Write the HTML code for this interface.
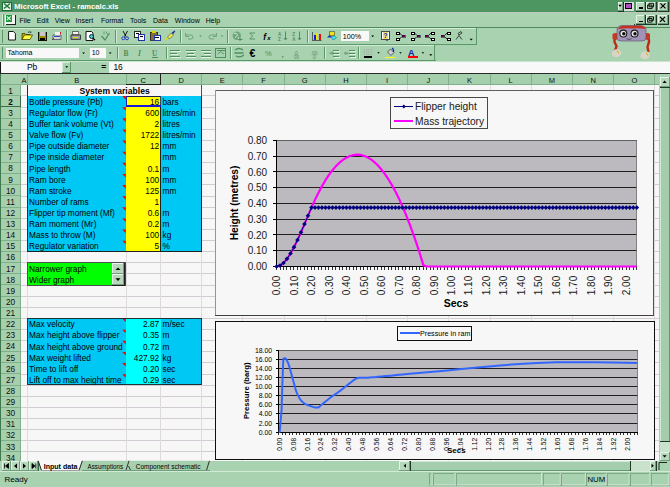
<!DOCTYPE html>
<html><head><meta charset="utf-8"><title>Excel</title>
<style>html,body{margin:0;padding:0;width:670px;height:487px;overflow:hidden;background:#f7f7f7}
svg{display:block} text{font-family:"Liberation Sans",sans-serif} rect,line{shape-rendering:crispEdges}</style></head>
<body><svg width="670" height="487" viewBox="0 0 670 487" style="font-family:'Liberation Sans',sans-serif">
<rect x="0.00" y="0.00" width="670.00" height="12.00" fill="#4e9661" />
<rect x="2.00" y="1.50" width="10.00" height="9.00" fill="#1f6b35" />
<rect x="3.00" y="2.50" width="8.00" height="7.00" fill="#e8f4ea" />
<path d="M4,3.5 L10,8.5 M10,3.5 L4,8.5" stroke="#1f7a3a" stroke-width="1.6"/>
<text x="14.30" y="9.30" font-size="7.6" fill="#ffffff" text-anchor="start" font-weight="bold"  style="">Microsoft Excel - ramcalc.xls</text>
<rect x="617.60" y="1.50" width="5.00" height="9.00" fill="#b5d8bb" />
<rect x="617.60" y="1.50" width="5.00" height="1.00" fill="#e6f3e8" />
<rect x="617.60" y="1.50" width="1.00" height="9.00" fill="#e6f3e8" />
<rect x="617.60" y="9.50" width="5.00" height="1.00" fill="#6f9f7a" />
<rect x="621.60" y="1.50" width="1.00" height="9.00" fill="#6f9f7a" />
<rect x="617.60" y="10.50" width="6.00" height="1.00" fill="#1e3a25" />
<rect x="622.60" y="1.50" width="1.00" height="10.00" fill="#1e3a25" />
<path d="M618.4,4.8 h3.4 l-1.7,2.2z" fill="#000"/>
<rect x="623.90" y="1.50" width="9.80" height="9.00" fill="#dcdcdc" />
<rect x="625.30" y="2.80" width="7.00" height="6.40" fill="#000" />
<rect x="626.30" y="3.80" width="5.00" height="4.40" fill="#b050c0" />
<rect x="636.00" y="1.50" width="9.40" height="9.00" fill="#b5d8bb" />
<rect x="636.00" y="1.50" width="9.40" height="1.00" fill="#e6f3e8" />
<rect x="636.00" y="1.50" width="1.00" height="9.00" fill="#e6f3e8" />
<rect x="636.00" y="9.50" width="9.40" height="1.00" fill="#6f9f7a" />
<rect x="644.40" y="1.50" width="1.00" height="9.00" fill="#6f9f7a" />
<rect x="636.00" y="10.50" width="10.40" height="1.00" fill="#1e3a25" />
<rect x="645.40" y="1.50" width="1.00" height="10.00" fill="#1e3a25" />
<rect x="638.5" y="7.2" width="4" height="1.3" fill="#000"/>
<rect x="645.60" y="1.50" width="10.40" height="9.00" fill="#b5d8bb" />
<rect x="645.60" y="1.50" width="10.40" height="1.00" fill="#e6f3e8" />
<rect x="645.60" y="1.50" width="1.00" height="9.00" fill="#e6f3e8" />
<rect x="645.60" y="9.50" width="10.40" height="1.00" fill="#6f9f7a" />
<rect x="655.00" y="1.50" width="1.00" height="9.00" fill="#6f9f7a" />
<rect x="645.60" y="10.50" width="11.40" height="1.00" fill="#1e3a25" />
<rect x="656.00" y="1.50" width="1.00" height="10.00" fill="#1e3a25" />
<path d="M649,3.3 h4.5 v3.5 h-4.5z M647.6,5 h4.5 v3.6 h-4.5z" fill="none" stroke="#000" stroke-width="0.9"/>
<rect x="658.00" y="1.50" width="10.20" height="9.00" fill="#b5d8bb" />
<rect x="658.00" y="1.50" width="10.20" height="1.00" fill="#e6f3e8" />
<rect x="658.00" y="1.50" width="1.00" height="9.00" fill="#e6f3e8" />
<rect x="658.00" y="9.50" width="10.20" height="1.00" fill="#6f9f7a" />
<rect x="667.20" y="1.50" width="1.00" height="9.00" fill="#6f9f7a" />
<rect x="658.00" y="10.50" width="11.20" height="1.00" fill="#1e3a25" />
<rect x="668.20" y="1.50" width="1.00" height="10.00" fill="#1e3a25" />
<path d="M660.5,3.4 L665.5,8.4 M665.5,3.4 L660.5,8.4" stroke="#000" stroke-width="1.2"/>
<rect x="0.00" y="12.00" width="670.00" height="61.00" fill="#a8d2b0" />
<rect x="0.00" y="12.00" width="670.00" height="1.00" fill="#c2c6c0" />
<rect x="0.00" y="27.00" width="670.00" height="1.00" fill="#4f8a5c" />
<rect x="1.50" y="14.00" width="1.00" height="12.00" fill="#d2ead6" />
<rect x="2.50" y="14.00" width="1.00" height="12.00" fill="#5a9868" />
<rect x="5.00" y="14.50" width="10.00" height="10.00" fill="#f4f4f4" />
<rect x="5.50" y="24.00" width="10.50" height="1.20" fill="#202020" />
<rect x="15.00" y="15.00" width="1.20" height="10.00" fill="#202020" />
<rect x="5.50" y="15.00" width="6.50" height="6.50" fill="#1a9a3a" />
<path d="M6.8,16.3 L10.7,20.2 M10.7,16.3 L6.8,20.2" stroke="#e8f4ea" stroke-width="1.1"/>
<text x="19.40" y="23.30" font-size="7.0" fill="#000" text-anchor="start"  style="">File</text>
<rect x="19.40" y="24.60" width="3.50" height="0.70" fill="#404040" />
<text x="36.70" y="23.30" font-size="7.0" fill="#000" text-anchor="start"  style="">Edit</text>
<rect x="36.70" y="24.60" width="3.50" height="0.70" fill="#404040" />
<text x="54.70" y="23.30" font-size="7.0" fill="#000" text-anchor="start"  style="">View</text>
<rect x="54.70" y="24.60" width="4.50" height="0.70" fill="#404040" />
<text x="75.60" y="23.30" font-size="7.0" fill="#000" text-anchor="start"  style="">Insert</text>
<rect x="75.60" y="24.60" width="2.00" height="0.70" fill="#404040" />
<text x="101.00" y="23.30" font-size="7.0" fill="#000" text-anchor="start"  style="">Format</text>
<rect x="105.50" y="24.60" width="3.50" height="0.70" fill="#404040" />
<text x="130.00" y="23.30" font-size="7.0" fill="#000" text-anchor="start"  style="">Tools</text>
<rect x="130.00" y="24.60" width="3.80" height="0.70" fill="#404040" />
<text x="153.00" y="23.30" font-size="7.0" fill="#000" text-anchor="start"  style="">Data</text>
<rect x="153.00" y="24.60" width="4.20" height="0.70" fill="#404040" />
<text x="174.80" y="23.30" font-size="7.0" fill="#000" text-anchor="start"  style="">Window</text>
<rect x="174.80" y="24.60" width="5.50" height="0.70" fill="#404040" />
<text x="205.70" y="23.30" font-size="7.0" fill="#000" text-anchor="start"  style="">Help</text>
<rect x="205.70" y="24.60" width="4.20" height="0.70" fill="#404040" />
<rect x="636.00" y="15.00" width="9.40" height="9.40" fill="#b5d8bb" />
<rect x="636.00" y="15.00" width="9.40" height="1.00" fill="#e6f3e8" />
<rect x="636.00" y="15.00" width="1.00" height="9.40" fill="#e6f3e8" />
<rect x="636.00" y="23.40" width="9.40" height="1.00" fill="#6f9f7a" />
<rect x="644.40" y="15.00" width="1.00" height="9.40" fill="#6f9f7a" />
<rect x="636.00" y="24.40" width="10.40" height="1.00" fill="#1e3a25" />
<rect x="645.40" y="15.00" width="1.00" height="10.40" fill="#1e3a25" />
<rect x="638.5" y="20.6" width="4" height="1.3" fill="#000"/>
<rect x="645.60" y="15.00" width="10.40" height="9.40" fill="#b5d8bb" />
<rect x="645.60" y="15.00" width="10.40" height="1.00" fill="#e6f3e8" />
<rect x="645.60" y="15.00" width="1.00" height="9.40" fill="#e6f3e8" />
<rect x="645.60" y="23.40" width="10.40" height="1.00" fill="#6f9f7a" />
<rect x="655.00" y="15.00" width="1.00" height="9.40" fill="#6f9f7a" />
<rect x="645.60" y="24.40" width="11.40" height="1.00" fill="#1e3a25" />
<rect x="656.00" y="15.00" width="1.00" height="10.40" fill="#1e3a25" />
<path d="M649,16.8 h4.5 v3.5 h-4.5z M647.6,18.5 h4.5 v3.6 h-4.5z" fill="none" stroke="#000" stroke-width="0.9"/>
<rect x="657.50" y="15.00" width="10.50" height="9.40" fill="#b5d8bb" />
<rect x="657.50" y="15.00" width="10.50" height="1.00" fill="#e6f3e8" />
<rect x="657.50" y="15.00" width="1.00" height="9.40" fill="#e6f3e8" />
<rect x="657.50" y="23.40" width="10.50" height="1.00" fill="#6f9f7a" />
<rect x="667.00" y="15.00" width="1.00" height="9.40" fill="#6f9f7a" />
<rect x="657.50" y="24.40" width="11.50" height="1.00" fill="#1e3a25" />
<rect x="668.00" y="15.00" width="1.00" height="10.40" fill="#1e3a25" />
<path d="M660,16.9 L665,21.9 M665,16.9 L660,21.9" stroke="#000" stroke-width="1.2"/>
<rect x="0.00" y="28.00" width="476.00" height="16.30" fill="#a8d2b0" />
<rect x="0.00" y="28.00" width="476.00" height="1.00" fill="#d2ead6" />
<rect x="0.00" y="43.60" width="476.50" height="1.00" fill="#5a9868" />
<rect x="475.60" y="28.00" width="1.00" height="16.00" fill="#5a9868" />
<rect x="1.50" y="29.50" width="1.00" height="13.00" fill="#d2ead6" />
<rect x="2.40" y="29.50" width="1.00" height="13.00" fill="#5a9868" />
<rect x="0.00" y="44.50" width="435.00" height="16.50" fill="#a8d2b0" />
<rect x="0.00" y="44.50" width="435.00" height="1.00" fill="#d2ead6" />
<rect x="0.00" y="60.20" width="435.50" height="1.00" fill="#5a9868" />
<rect x="434.40" y="44.50" width="1.00" height="16.50" fill="#5a9868" />
<rect x="1.50" y="46.50" width="1.00" height="12.50" fill="#d2ead6" />
<rect x="2.40" y="46.50" width="1.00" height="12.50" fill="#5a9868" />
<rect x="66.00" y="29.50" width="1.00" height="13.00" fill="#5a9868" />
<rect x="67.00" y="29.50" width="1.00" height="13.00" fill="#d2ead6" />
<rect x="115.00" y="29.50" width="1.00" height="13.00" fill="#5a9868" />
<rect x="116.00" y="29.50" width="1.00" height="13.00" fill="#d2ead6" />
<rect x="180.00" y="29.50" width="1.00" height="13.00" fill="#5a9868" />
<rect x="181.00" y="29.50" width="1.00" height="13.00" fill="#d2ead6" />
<rect x="227.00" y="29.50" width="1.00" height="13.00" fill="#5a9868" />
<rect x="228.00" y="29.50" width="1.00" height="13.00" fill="#d2ead6" />
<rect x="307.00" y="29.50" width="1.00" height="13.00" fill="#5a9868" />
<rect x="308.00" y="29.50" width="1.00" height="13.00" fill="#d2ead6" />
<rect x="117.00" y="46.50" width="1.00" height="12.50" fill="#5a9868" />
<rect x="118.00" y="46.50" width="1.00" height="12.50" fill="#d2ead6" />
<rect x="166.00" y="46.50" width="1.00" height="12.50" fill="#5a9868" />
<rect x="167.00" y="46.50" width="1.00" height="12.50" fill="#d2ead6" />
<rect x="230.00" y="46.50" width="1.00" height="12.50" fill="#5a9868" />
<rect x="231.00" y="46.50" width="1.00" height="12.50" fill="#d2ead6" />
<rect x="324.00" y="46.50" width="1.00" height="12.50" fill="#5a9868" />
<rect x="325.00" y="46.50" width="1.00" height="12.50" fill="#d2ead6" />
<rect x="358.00" y="46.50" width="1.00" height="12.50" fill="#5a9868" />
<rect x="359.00" y="46.50" width="1.00" height="12.50" fill="#d2ead6" />
<path d="M8.6,31.5 h4.8 l2,2 v6.5 h-6.8z" fill="#fff" stroke="#000" stroke-width="0.9"/>
<path d="M22,33.5 h3 l1,1 h4 v1 h-5 l-3,4.5z" fill="#c8a800" stroke="#303000" stroke-width="0.7"/>
<path d="M22,39.5 l2.5,-4.5 h8 l-2.5,4.5z" fill="#ffff40" stroke="#303000" stroke-width="0.7"/>
<path d="M28,32.5 q1.5,-1.5 3,0 l0.5,-0.8" fill="none" stroke="#000" stroke-width="0.7"/>
<rect x="37.70" y="31.70" width="9.20" height="9.00" fill="#101000" />
<rect x="38.60" y="32.40" width="7.40" height="7.80" fill="#a09000" />
<rect x="39.80" y="32.40" width="5.00" height="3.60" fill="#c8c8c8" />
<rect x="39.50" y="37.60" width="5.60" height="2.60" fill="#000" />
<path d="M53,35 h8 v4.5 h-8z" fill="#d8d8d8" stroke="#404040" stroke-width="0.7"/>
<rect x="54.50" y="32.00" width="5.50" height="3.00" fill="#f0f0f0" />
<rect x="54.30" y="35.80" width="6.00" height="0.90" fill="#3050c0" />
<rect x="60.00" y="32.30" width="1.20" height="1.20" fill="#d02020" />
<path d="M52,40 l2,-2" stroke="#303030" stroke-width="0.8"/>
<rect x="72.50" y="31.80" width="6.00" height="3.00" fill="#f4f4f4" stroke="#303030" stroke-width="0.6"/>
<path d="M71,35 h9.5 v4.4 h-9.5z" fill="#a0a0a0" stroke="#202020" stroke-width="0.8"/>
<rect x="73.00" y="36.60" width="4.50" height="1.20" fill="#e8e000" />
<path d="M86,31.5 h5.5 l1.5,1.5 v7.5 h-7z" fill="#fff" stroke="#000" stroke-width="0.9"/>
<circle cx="91.5" cy="36.5" r="2" fill="#40d0e0" stroke="#000" stroke-width="0.8"/><path d="M93,38 l2,2.2" stroke="#000" stroke-width="1.1"/>
<path d="M101.5,36 l3.5,4 l4.5,-7" fill="none" stroke="#4f8f5d" stroke-width="1.2"/>
<path d="M104,31.5 v3 M106,31.5 l1.5,3" stroke="#4f8f5d" stroke-width="0.8"/>
<path d="M123,31 l3,5.5 M127.5,31 l-3,5.5" stroke="#000" stroke-width="0.9"/>
<circle cx="123.3" cy="38.3" r="1.5" fill="none" stroke="#2030c0" stroke-width="0.9"/><circle cx="127" cy="38.3" r="1.5" fill="none" stroke="#2030c0" stroke-width="0.9"/>
<rect x="134.80" y="31.80" width="5.50" height="5.50" fill="#fff" stroke="#000" stroke-width="0.8"/>
<rect x="138.50" y="34.80" width="6.00" height="5.60" fill="#fff" stroke="#1020a0" stroke-width="0.9"/>
<rect x="135.50" y="33.00" width="3.00" height="0.90" fill="#000" />
<rect x="139.50" y="36.30" width="3.50" height="0.90" fill="#000" />
<rect x="150.00" y="32.30" width="7.50" height="8.00" fill="#807040" stroke="#202020" stroke-width="0.8"/>
<rect x="152.00" y="31.20" width="3.50" height="1.80" fill="#e0d000" />
<rect x="154.00" y="35.30" width="6.00" height="5.20" fill="#fff" stroke="#1020a0" stroke-width="0.9"/>
<rect x="155.00" y="37.00" width="3.50" height="0.80" fill="#000" />
<path d="M165.5,40 l3,-3" stroke="#e0e000" stroke-width="1.4"/><path d="M167.5,37 l4,-4 l2,2 l-4,4z" fill="#f0f040" stroke="#404040" stroke-width="0.6"/><path d="M171.5,33 l3,-2.5 l0.8,0.8 l-2.3,3z" fill="#1a2a90"/>
<path d="M186,35 h5 a2,2 0 0 1 0,4 h-3" fill="none" stroke="#6fa77c" stroke-width="1"/><path d="M185.5,33 v3.5 h3.5" fill="none" stroke="#6fa77c" stroke-width="1"/>
<path d="M199.2,35.6 h2.4 l-1.2,1.4z" fill="#4f8f5d"/>
<path d="M216,35 h-5 a2,2 0 0 0 0,4 h3" fill="none" stroke="#6fa77c" stroke-width="1"/><path d="M216.5,33 v3.5 h-3.5" fill="none" stroke="#6fa77c" stroke-width="1"/>
<path d="M220.8,35.6 h2.4 l-1.2,1.4z" fill="#4f8f5d"/>
<circle cx="236.8" cy="35.8" r="4.2" fill="#6fa77c"/><path d="M234,33.5 q2,-1 3.5,1 q-0.5,2 -2.5,3 M238,37 l1,2" stroke="#cfe6d3" stroke-width="1" fill="none"/>
<path d="M238.5,39.5 h4 M240,38 v3" stroke="#4f8f5d" stroke-width="1" fill="none"/>
<path d="M255,33 h-5.2 l2.8,3 l-2.8,3 h5.2" fill="none" stroke="#4f8f5d" stroke-width="0.9"/>
<text x="263.30" y="39.60" font-size="8.5" fill="#000" text-anchor="start" font-weight="bold"  style="font-style:italic">f</text>
<text x="267.30" y="39.80" font-size="6" fill="#000" text-anchor="start" font-weight="bold"  style="font-style:italic">x</text>
<text x="278.00" y="36.00" font-size="4.5" fill="#4f8f5d" text-anchor="start" font-weight="bold"  style="">A</text>
<text x="278.00" y="40.50" font-size="4.5" fill="#4f8f5d" text-anchor="start" font-weight="bold"  style="">Z</text>
<path d="M285.5,31.5 v8 M284,38 l1.5,2 l1.5,-2" stroke="#4f8f5d" stroke-width="1" fill="none"/>
<text x="292.20" y="36.00" font-size="4.5" fill="#4f8f5d" text-anchor="start" font-weight="bold"  style="">Z</text>
<text x="292.20" y="40.50" font-size="4.5" fill="#4f8f5d" text-anchor="start" font-weight="bold"  style="">A</text>
<path d="M299.5,31.5 v8 M298,38 l1.5,2 l1.5,-2" stroke="#4f8f5d" stroke-width="1" fill="none"/>
<path d="M312,40.5 h9.5 M312.5,32 v8.5" stroke="#404040" stroke-width="0.8"/>
<rect x="313.50" y="34.60" width="2.40" height="5.40" fill="#1020e0" />
<rect x="316.00" y="32.60" width="2.40" height="7.40" fill="#f0e000" />
<rect x="318.50" y="34.00" width="2.40" height="6.00" fill="#e01010" />
<path d="M327,37.5 l3,-3 l2,3 z" fill="#2030c0"/>
<rect x="329.50" y="31.80" width="5.00" height="4.00" fill="#f0e020" stroke="#303030" stroke-width="0.5"/>
<path d="M331,37 l3.5,-1.5 l2,2.5 l-3.5,2z" fill="#40e0f0" stroke="#206080" stroke-width="0.5"/>
<rect x="340.90" y="31.30" width="28.10" height="10.00" fill="#f8f8f8" />
<text x="342.70" y="39.40" font-size="7.2" fill="#000" text-anchor="start"  style="">100%</text>
<rect x="369.00" y="31.30" width="7.70" height="10.00" fill="#a8d2b0" />
<path d="M371.3,35.6 h2.8 l-1.4,1.6z" fill="#000"/>
<rect x="381.50" y="31.20" width="7.50" height="8.60" fill="#fff" stroke="#202020" stroke-width="0.8"/>
<rect x="382.50" y="32.20" width="5.50" height="6.60" fill="#f0e060" />
<text x="383.20" y="38.30" font-size="7" fill="#1030c0" text-anchor="start" font-weight="bold"  style="">?</text>
<path d="M385,39.8 l2.5,1.5 v-1.5" fill="#202020"/>
<rect x="396.00" y="32.00" width="4.00" height="3.00" fill="#000" />
<rect x="397.00" y="33.00" width="2.00" height="1.00" fill="#fff" />
<rect x="396.00" y="38.00" width="4.00" height="3.00" fill="#000" />
<rect x="397.00" y="39.00" width="2.00" height="1.00" fill="#fff" />
<rect x="402.00" y="35.40" width="3.20" height="1.60" fill="#800080" stroke="#000" stroke-width="0.5"/>
<path d="M399.5,33 l2.5,2.5 M399.5,39 l2.5,-2.5" stroke="#000" stroke-width="0.8"/>
<rect x="411.00" y="32.00" width="4.00" height="3.00" fill="#000" />
<rect x="412.00" y="33.00" width="2.00" height="1.00" fill="#fff" />
<rect x="411.00" y="38.00" width="4.00" height="3.00" fill="#000" />
<rect x="412.00" y="39.00" width="2.00" height="1.00" fill="#fff" />
<rect x="417.00" y="35.40" width="3.20" height="1.60" fill="#800080" stroke="#000" stroke-width="0.5"/>
<path d="M414.5,33 l2.5,2.5 M414.5,39 l2.5,-2.5" stroke="#000" stroke-width="0.8"/>
<rect x="431.00" y="32.00" width="4.00" height="3.00" fill="#000" />
<rect x="432.00" y="33.00" width="2.00" height="1.00" fill="#fff" />
<rect x="431.00" y="38.00" width="4.00" height="3.00" fill="#000" />
<rect x="432.00" y="39.00" width="2.00" height="1.00" fill="#fff" />
<rect x="425.00" y="35.40" width="3.20" height="1.60" fill="#800080" stroke="#000" stroke-width="0.5"/>
<path d="M431,33 l-2.5,2.5 M431,39 l-2.5,-2.5" stroke="#000" stroke-width="0.8"/>
<rect x="447.00" y="32.00" width="4.00" height="3.00" fill="#000" />
<rect x="448.00" y="33.00" width="2.00" height="1.00" fill="#fff" />
<rect x="447.00" y="38.00" width="4.00" height="3.00" fill="#000" />
<rect x="448.00" y="39.00" width="2.00" height="1.00" fill="#fff" />
<rect x="441.00" y="35.40" width="3.20" height="1.60" fill="#800080" stroke="#000" stroke-width="0.5"/>
<path d="M447,33 l-2.5,2.5 M447,39 l-2.5,-2.5" stroke="#000" stroke-width="0.8"/>
<path d="M456,39.5 l3,-4 l3,4 M458,33.5 l3,-2 l1,1.5 l-3,2z" fill="none" stroke="#202020" stroke-width="0.8"/>
<path d="M469.6,38.8 h3.2 l-1.6,1.8z" fill="#000"/>
<rect x="6.00" y="48.20" width="73.30" height="9.60" fill="#f8f8f8" />
<text x="7.60" y="55.30" font-size="7.0" fill="#000" text-anchor="start"  style="">Tahoma</text>
<rect x="79.30" y="48.20" width="7.60" height="9.60" fill="#a8d2b0" />
<path d="M82.2,52.4 h2.8 l-1.4,1.6z" fill="#000"/>
<rect x="90.30" y="48.20" width="15.70" height="9.60" fill="#f8f8f8" />
<text x="91.70" y="55.30" font-size="7.0" fill="#000" text-anchor="start"  style="">10</text>
<rect x="106.00" y="48.20" width="7.70" height="9.60" fill="#a8d2b0" />
<path d="M108.8,52.4 h2.8 l-1.4,1.6z" fill="#000"/>
<text x="123.50" y="56.00" font-size="7.5" fill="#4f8f5d" text-anchor="start" font-weight="bold"  style="font-family:Liberation Serif">B</text>
<text x="138.00" y="56.00" font-size="7.5" fill="#4f8f5d" text-anchor="start" font-weight="bold"  style="font-family:Liberation Serif;font-style:italic">I</text>
<text x="152.00" y="56.00" font-size="7.2" fill="#4f8f5d" text-anchor="start" font-weight="bold"  style="font-family:Liberation Serif">U</text>
<rect x="152.00" y="57.00" width="6.00" height="0.80" fill="#4f8f5d" />
<rect x="170.00" y="49.60" width="10.00" height="1.20" fill="#4f8f5d" />
<rect x="170.60" y="50.80" width="10.00" height="0.80" fill="#e6f3e8" />
<rect x="170.00" y="52.60" width="7.00" height="1.20" fill="#4f8f5d" />
<rect x="170.60" y="53.80" width="7.00" height="0.80" fill="#e6f3e8" />
<rect x="170.00" y="55.60" width="10.00" height="1.20" fill="#4f8f5d" />
<rect x="170.60" y="56.80" width="10.00" height="0.80" fill="#e6f3e8" />
<rect x="185.50" y="49.60" width="10.00" height="1.20" fill="#4f8f5d" />
<rect x="186.10" y="50.80" width="10.00" height="0.80" fill="#e6f3e8" />
<rect x="187.00" y="52.60" width="7.00" height="1.20" fill="#4f8f5d" />
<rect x="187.60" y="53.80" width="7.00" height="0.80" fill="#e6f3e8" />
<rect x="185.50" y="55.60" width="10.00" height="1.20" fill="#4f8f5d" />
<rect x="186.10" y="56.80" width="10.00" height="0.80" fill="#e6f3e8" />
<rect x="200.50" y="49.60" width="10.00" height="1.20" fill="#4f8f5d" />
<rect x="201.10" y="50.80" width="10.00" height="0.80" fill="#e6f3e8" />
<rect x="203.50" y="52.60" width="7.00" height="1.20" fill="#4f8f5d" />
<rect x="204.10" y="53.80" width="7.00" height="0.80" fill="#e6f3e8" />
<rect x="200.50" y="55.60" width="10.00" height="1.20" fill="#4f8f5d" />
<rect x="201.10" y="56.80" width="10.00" height="0.80" fill="#e6f3e8" />
<rect x="215.80" y="48.60" width="9.60" height="9.20" fill="none" stroke="#4f8f5d" stroke-width="1"/>
<rect x="216.50" y="50.40" width="8.40" height="0.80" fill="#4f8f5d" />
<rect x="216.50" y="55.60" width="8.40" height="0.80" fill="#4f8f5d" />
<path d="M217.5,54 l3.2,-2.4 l3.2,2.4" stroke="#4f8f5d" stroke-width="0.9" fill="none"/>
<path d="M235,50 q4,-3 8,0 M234.5,53 h9 M236,56 q4,2 8,-1" stroke="#4f8f5d" stroke-width="1.3" fill="none"/>
<text x="249.60" y="56.80" font-size="10.5" fill="#000" text-anchor="start" font-weight="bold"  style="">€</text>
<text x="265.00" y="56.20" font-size="7.5" fill="#4f8f5d" text-anchor="start"  style="">%</text>
<text x="281.50" y="56.50" font-size="8" fill="#4f8f5d" text-anchor="start" font-weight="bold"  style="">,</text>
<text x="293.50" y="54.50" font-size="5" fill="#4f8f5d" text-anchor="start"  style="">.0</text>
<text x="294.00" y="58.50" font-size="4.5" fill="#4f8f5d" text-anchor="start"  style="">00</text>
<text x="310.50" y="54.50" font-size="5" fill="#4f8f5d" text-anchor="start"  style="">.00</text>
<text x="312.00" y="58.50" font-size="4.5" fill="#4f8f5d" text-anchor="start"  style="">.0</text>
<rect x="333.00" y="49.60" width="6.00" height="1.20" fill="#4f8f5d" />
<rect x="333.60" y="50.80" width="6.00" height="0.80" fill="#e6f3e8" />
<rect x="333.00" y="52.60" width="6.00" height="1.20" fill="#4f8f5d" />
<rect x="333.60" y="53.80" width="6.00" height="0.80" fill="#e6f3e8" />
<rect x="333.00" y="55.60" width="6.00" height="1.20" fill="#4f8f5d" />
<rect x="333.60" y="56.80" width="6.00" height="0.80" fill="#e6f3e8" />
<path d="M329.5,53.2 h3 M332,51.7 l1.5,1.5 l-1.5,1.5" stroke="#4f8f5d" stroke-width="1" fill="none"/>
<rect x="349.00" y="49.60" width="6.00" height="1.20" fill="#4f8f5d" />
<rect x="349.60" y="50.80" width="6.00" height="0.80" fill="#e6f3e8" />
<rect x="349.00" y="52.60" width="6.00" height="1.20" fill="#4f8f5d" />
<rect x="349.60" y="53.80" width="6.00" height="0.80" fill="#e6f3e8" />
<rect x="349.00" y="55.60" width="6.00" height="1.20" fill="#4f8f5d" />
<rect x="349.60" y="56.80" width="6.00" height="0.80" fill="#e6f3e8" />
<path d="M345.5,53.2 h3 M346,51.7 l-1.5,1.5 l1.5,1.5" stroke="#4f8f5d" stroke-width="1" fill="none"/>
<path d="M364,49.5 h8 v5 h-8z M368,49.5 v5 M364,52 h8" fill="none" stroke="#a0a0a0" stroke-width="0.6" stroke-dasharray="1,1"/>
<rect x="363.50" y="56.30" width="8.50" height="1.30" fill="#000" />
<path d="M377.2,52.3 h2.6 l-1.3,1.4z" fill="#000"/>
<path d="M387.5,52 l3,-3 l3.5,3.5 l-3,3z" fill="#d0d0d0" stroke="#303030" stroke-width="0.7"/><path d="M392,48 q2,1 1.5,4" stroke="#1020c0" stroke-width="1.2" fill="none"/>
<rect x="385.00" y="56.50" width="10.00" height="1.80" fill="#ffff00" />
<path d="M399.2,52.3 h2.6 l-1.3,1.4z" fill="#000"/>
<text x="408.00" y="55.60" font-size="9" fill="#1020b0" text-anchor="start" font-weight="bold"  style="">A</text>
<rect x="407.50" y="56.40" width="10.50" height="2.00" fill="#ff0000" />
<path d="M421.6,52.3 h2.6 l-1.3,1.4z" fill="#000"/>
<path d="M429.2,54.2 h3.2 l-1.6,1.8z" fill="#000"/>
<path d="M617.5,37 q-3.5,1 -3,5 q1.5,3 2,4 l-1.5,5" stroke="#c02818" stroke-width="2.4" fill="none"/>
<path d="M645.5,37 q4,1 3.5,5 q-1,3 -1.5,5 l1,5" stroke="#c02818" stroke-width="2.4" fill="none"/>
<path d="M612.5,34 q3,-2 5.5,0 v5 q-3,1.5 -5.5,0z" fill="#c83a20"/>
<path d="M644.5,34 q3,-2 5.5,0 v5 q-3,1.5 -5.5,0z" fill="#c83a20"/>
<path d="M612,55.5 q-1,-4 3,-6 q4,-1 6,2 q1,3 -2,5 q-4,1.5 -7,-1z" fill="#d8d4c8"/>
<path d="M640.5,57.5 q-1,-4 3,-6 q4,-1 6,2 q1,3 -2,5 q-4,1.5 -7,-1z" fill="#d8d4c8"/>
<path d="M617,50.5 l2,3 M646,52.5 l2,3" stroke="#d8b820" stroke-width="1.2"/>
<path d="M617,30 q0,-4 5,-4.5 h18 q6,0.5 6,4.5 v8 q0,3 -4,3 h-21 q-4,0 -4,-3z" fill="#a092b8" stroke="#5a4a6a" stroke-width="0.6"/>
<path d="M618,29 q1,-3 6,-3.2 h16 q5,0.3 5.5,3.2 q-6,-1 -13,-0.5 q-8,-0.5 -14.5,0.5z" fill="#c83020"/>
<rect x="633.5" y="23.5" width="1.2" height="2.5" fill="#404040"/>
<circle cx="623.3" cy="33.6" r="4" fill="#1a1a1a"/><circle cx="623.3" cy="33.6" r="2.9" fill="#e8e8e8"/><circle cx="623.8" cy="33.8" r="1.7" fill="#101010"/>
<circle cx="634.5" cy="33.6" r="4" fill="#1a1a1a"/><circle cx="634.5" cy="33.6" r="2.9" fill="#e8e8e8"/><circle cx="635" cy="33.8" r="1.7" fill="#101010"/>
<path d="M626.5,38.8 q2.5,1.2 5,0" stroke="#303030" stroke-width="0.7" fill="none"/>
<rect x="0.00" y="61.00" width="670.00" height="1.00" fill="#c8e4cc" />
<rect x="0.00" y="61.80" width="62.20" height="11.20" fill="#f8f8f8" />
<text x="26.90" y="69.90" font-size="8.5" fill="#000" text-anchor="start"  style="">Pb</text>
<rect x="62.20" y="61.80" width="9.00" height="11.00" fill="#a8d2b0" />
<rect x="62.20" y="61.80" width="9.00" height="1.00" fill="#d2ead6" />
<rect x="62.20" y="61.80" width="1.00" height="11.00" fill="#d2ead6" />
<rect x="62.20" y="71.80" width="9.00" height="1.00" fill="#5a9868" />
<rect x="70.20" y="61.80" width="1.00" height="11.00" fill="#5a9868" />
<rect x="62.20" y="72.80" width="10.00" height="1.00" fill="#1e3a25" />
<rect x="71.20" y="61.80" width="1.00" height="12.00" fill="#1e3a25" />
<path d="M65.3,66.3 h2.8 l-1.4,1.6z" fill="#000"/>
<rect x="71.20" y="61.80" width="38.00" height="11.20" fill="#a8d2b0" />
<text x="101.20" y="70.20" font-size="8.5" fill="#000" text-anchor="start" font-weight="bold"  style="">=</text>
<rect x="109.20" y="61.80" width="560.80" height="11.20" fill="#f8f8f8" />
<text x="113.40" y="69.90" font-size="8.4" fill="#000" text-anchor="start"  style="">16</text>
<rect x="0.00" y="73.00" width="670.00" height="1.00" fill="#2a2a2a" />
<rect x="0.00" y="62.00" width="1.00" height="11.00" fill="#101010" />
<rect x="0.00" y="73.80" width="659.00" height="11.00" fill="#a6cfae" />
<rect x="0.00" y="84.80" width="20.50" height="402.20" fill="#a6cfae" />
<rect x="27.00" y="73.80" width="1.00" height="11.00" fill="#80b08a" />
<text x="24.00" y="82.50" font-size="7.5" fill="#101010" text-anchor="middle"  style="">A</text>
<rect x="125.50" y="73.80" width="1.00" height="11.00" fill="#80b08a" />
<text x="76.75" y="82.50" font-size="7.5" fill="#101010" text-anchor="middle"  style="">B</text>
<rect x="160.10" y="73.80" width="1.00" height="11.00" fill="#80b08a" />
<text x="143.30" y="82.50" font-size="7.5" fill="#000" text-anchor="middle"  style="">C</text>
<rect x="201.20" y="73.80" width="1.00" height="11.00" fill="#80b08a" />
<text x="181.15" y="82.50" font-size="7.5" fill="#101010" text-anchor="middle"  style="">D</text>
<rect x="242.40" y="73.80" width="1.00" height="11.00" fill="#80b08a" />
<text x="222.30" y="82.50" font-size="7.5" fill="#101010" text-anchor="middle"  style="">E</text>
<rect x="283.60" y="73.80" width="1.00" height="11.00" fill="#80b08a" />
<text x="263.50" y="82.50" font-size="7.5" fill="#101010" text-anchor="middle"  style="">F</text>
<rect x="324.80" y="73.80" width="1.00" height="11.00" fill="#80b08a" />
<text x="304.70" y="82.50" font-size="7.5" fill="#101010" text-anchor="middle"  style="">G</text>
<rect x="366.00" y="73.80" width="1.00" height="11.00" fill="#80b08a" />
<text x="345.90" y="82.50" font-size="7.5" fill="#101010" text-anchor="middle"  style="">H</text>
<rect x="407.20" y="73.80" width="1.00" height="11.00" fill="#80b08a" />
<text x="387.10" y="82.50" font-size="7.5" fill="#101010" text-anchor="middle"  style="">I</text>
<rect x="448.40" y="73.80" width="1.00" height="11.00" fill="#80b08a" />
<text x="428.30" y="82.50" font-size="7.5" fill="#101010" text-anchor="middle"  style="">J</text>
<rect x="489.60" y="73.80" width="1.00" height="11.00" fill="#80b08a" />
<text x="469.50" y="82.50" font-size="7.5" fill="#101010" text-anchor="middle"  style="">K</text>
<rect x="530.80" y="73.80" width="1.00" height="11.00" fill="#80b08a" />
<text x="510.70" y="82.50" font-size="7.5" fill="#101010" text-anchor="middle"  style="">L</text>
<rect x="572.00" y="73.80" width="1.00" height="11.00" fill="#80b08a" />
<text x="551.90" y="82.50" font-size="7.5" fill="#101010" text-anchor="middle"  style="">M</text>
<rect x="613.20" y="73.80" width="1.00" height="11.00" fill="#80b08a" />
<text x="593.10" y="82.50" font-size="7.5" fill="#101010" text-anchor="middle"  style="">N</text>
<rect x="654.40" y="73.80" width="1.00" height="11.00" fill="#80b08a" />
<text x="634.30" y="82.50" font-size="7.5" fill="#101010" text-anchor="middle"  style="">O</text>
<rect x="0.00" y="84.30" width="659.00" height="1.00" fill="#80b08a" />
<rect x="0.00" y="95.32" width="20.50" height="1.00" fill="#80b08a" />
<text x="10.50" y="93.60" font-size="8.3" fill="#101010" text-anchor="middle"  style="">1</text>
<rect x="0.00" y="106.45" width="20.50" height="1.00" fill="#80b08a" />
<text x="10.50" y="104.72" font-size="8.3" fill="#101010" text-anchor="middle" font-weight="bold"  style="">2</text>
<rect x="0.00" y="117.57" width="20.50" height="1.00" fill="#80b08a" />
<text x="10.50" y="115.85" font-size="8.3" fill="#101010" text-anchor="middle"  style="">3</text>
<rect x="0.00" y="128.69" width="20.50" height="1.00" fill="#80b08a" />
<text x="10.50" y="126.97" font-size="8.3" fill="#101010" text-anchor="middle"  style="">4</text>
<rect x="0.00" y="139.81" width="20.50" height="1.00" fill="#80b08a" />
<text x="10.50" y="138.09" font-size="8.3" fill="#101010" text-anchor="middle"  style="">5</text>
<rect x="0.00" y="150.94" width="20.50" height="1.00" fill="#80b08a" />
<text x="10.50" y="149.22" font-size="8.3" fill="#101010" text-anchor="middle"  style="">6</text>
<rect x="0.00" y="162.06" width="20.50" height="1.00" fill="#80b08a" />
<text x="10.50" y="160.34" font-size="8.3" fill="#101010" text-anchor="middle"  style="">7</text>
<rect x="0.00" y="173.18" width="20.50" height="1.00" fill="#80b08a" />
<text x="10.50" y="171.46" font-size="8.3" fill="#101010" text-anchor="middle"  style="">8</text>
<rect x="0.00" y="184.31" width="20.50" height="1.00" fill="#80b08a" />
<text x="10.50" y="182.58" font-size="8.3" fill="#101010" text-anchor="middle"  style="">9</text>
<rect x="0.00" y="195.43" width="20.50" height="1.00" fill="#80b08a" />
<text x="10.50" y="193.71" font-size="8.3" fill="#101010" text-anchor="middle"  style="">10</text>
<rect x="0.00" y="206.55" width="20.50" height="1.00" fill="#80b08a" />
<text x="10.50" y="204.83" font-size="8.3" fill="#101010" text-anchor="middle"  style="">11</text>
<rect x="0.00" y="217.68" width="20.50" height="1.00" fill="#80b08a" />
<text x="10.50" y="215.95" font-size="8.3" fill="#101010" text-anchor="middle"  style="">12</text>
<rect x="0.00" y="228.80" width="20.50" height="1.00" fill="#80b08a" />
<text x="10.50" y="227.08" font-size="8.3" fill="#101010" text-anchor="middle"  style="">13</text>
<rect x="0.00" y="239.92" width="20.50" height="1.00" fill="#80b08a" />
<text x="10.50" y="238.20" font-size="8.3" fill="#101010" text-anchor="middle"  style="">14</text>
<rect x="0.00" y="251.04" width="20.50" height="1.00" fill="#80b08a" />
<text x="10.50" y="249.32" font-size="8.3" fill="#101010" text-anchor="middle"  style="">15</text>
<rect x="0.00" y="262.17" width="20.50" height="1.00" fill="#80b08a" />
<text x="10.50" y="260.44" font-size="8.3" fill="#101010" text-anchor="middle"  style="">16</text>
<rect x="0.00" y="273.29" width="20.50" height="1.00" fill="#80b08a" />
<text x="10.50" y="271.57" font-size="8.3" fill="#101010" text-anchor="middle"  style="">17</text>
<rect x="0.00" y="284.41" width="20.50" height="1.00" fill="#80b08a" />
<text x="10.50" y="282.69" font-size="8.3" fill="#101010" text-anchor="middle"  style="">18</text>
<rect x="0.00" y="295.54" width="20.50" height="1.00" fill="#80b08a" />
<text x="10.50" y="293.81" font-size="8.3" fill="#101010" text-anchor="middle"  style="">19</text>
<rect x="0.00" y="306.66" width="20.50" height="1.00" fill="#80b08a" />
<text x="10.50" y="304.94" font-size="8.3" fill="#101010" text-anchor="middle"  style="">20</text>
<rect x="0.00" y="317.78" width="20.50" height="1.00" fill="#80b08a" />
<text x="10.50" y="316.06" font-size="8.3" fill="#101010" text-anchor="middle"  style="">21</text>
<rect x="0.00" y="328.91" width="20.50" height="1.00" fill="#80b08a" />
<text x="10.50" y="327.18" font-size="8.3" fill="#101010" text-anchor="middle"  style="">22</text>
<rect x="0.00" y="340.03" width="20.50" height="1.00" fill="#80b08a" />
<text x="10.50" y="338.31" font-size="8.3" fill="#101010" text-anchor="middle"  style="">23</text>
<rect x="0.00" y="351.15" width="20.50" height="1.00" fill="#80b08a" />
<text x="10.50" y="349.43" font-size="8.3" fill="#101010" text-anchor="middle"  style="">24</text>
<rect x="0.00" y="362.27" width="20.50" height="1.00" fill="#80b08a" />
<text x="10.50" y="360.55" font-size="8.3" fill="#101010" text-anchor="middle"  style="">25</text>
<rect x="0.00" y="373.40" width="20.50" height="1.00" fill="#80b08a" />
<text x="10.50" y="371.68" font-size="8.3" fill="#101010" text-anchor="middle"  style="">26</text>
<rect x="0.00" y="384.52" width="20.50" height="1.00" fill="#80b08a" />
<text x="10.50" y="382.80" font-size="8.3" fill="#101010" text-anchor="middle"  style="">27</text>
<rect x="0.00" y="395.64" width="20.50" height="1.00" fill="#80b08a" />
<text x="10.50" y="393.92" font-size="8.3" fill="#101010" text-anchor="middle"  style="">28</text>
<rect x="0.00" y="406.77" width="20.50" height="1.00" fill="#80b08a" />
<text x="10.50" y="405.04" font-size="8.3" fill="#101010" text-anchor="middle"  style="">29</text>
<rect x="0.00" y="417.89" width="20.50" height="1.00" fill="#80b08a" />
<text x="10.50" y="416.17" font-size="8.3" fill="#101010" text-anchor="middle"  style="">30</text>
<rect x="0.00" y="429.01" width="20.50" height="1.00" fill="#80b08a" />
<text x="10.50" y="427.29" font-size="8.3" fill="#101010" text-anchor="middle"  style="">31</text>
<rect x="0.00" y="440.14" width="20.50" height="1.00" fill="#80b08a" />
<text x="10.50" y="438.41" font-size="8.3" fill="#101010" text-anchor="middle"  style="">32</text>
<rect x="0.00" y="451.26" width="20.50" height="1.00" fill="#80b08a" />
<text x="10.50" y="449.54" font-size="8.3" fill="#101010" text-anchor="middle"  style="">33</text>
<rect x="0.00" y="462.38" width="20.50" height="1.00" fill="#80b08a" />
<text x="10.50" y="460.66" font-size="8.3" fill="#101010" text-anchor="middle"  style="">34</text>
<rect x="0.00" y="473.50" width="20.50" height="1.00" fill="#80b08a" />
<text x="10.50" y="471.78" font-size="8.3" fill="#101010" text-anchor="middle"  style="">35</text>
<rect x="20.00" y="84.80" width="1.00" height="402.20" fill="#80b08a" />
<rect x="159.60" y="73.80" width="1.00" height="11.00" fill="#202020" />
<rect x="126.00" y="84.00" width="34.60" height="1.00" fill="#202020" />
<rect x="0.00" y="106.05" width="20.50" height="1.00" fill="#3a6a48" />
<rect x="19.50" y="95.92" width="1.00" height="11.12" fill="#3a6a48" />
<rect x="0.00" y="73.80" width="1.00" height="413.20" fill="#3f7a4e" />
<rect x="20.50" y="95.42" width="638.50" height="1.00" fill="#d3ccd5" />
<rect x="20.50" y="106.55" width="638.50" height="1.00" fill="#d3ccd5" />
<rect x="20.50" y="117.67" width="638.50" height="1.00" fill="#d3ccd5" />
<rect x="20.50" y="128.79" width="638.50" height="1.00" fill="#d3ccd5" />
<rect x="20.50" y="139.91" width="638.50" height="1.00" fill="#d3ccd5" />
<rect x="20.50" y="151.04" width="638.50" height="1.00" fill="#d3ccd5" />
<rect x="20.50" y="162.16" width="638.50" height="1.00" fill="#d3ccd5" />
<rect x="20.50" y="173.28" width="638.50" height="1.00" fill="#d3ccd5" />
<rect x="20.50" y="184.41" width="638.50" height="1.00" fill="#d3ccd5" />
<rect x="20.50" y="195.53" width="638.50" height="1.00" fill="#d3ccd5" />
<rect x="20.50" y="206.65" width="638.50" height="1.00" fill="#d3ccd5" />
<rect x="20.50" y="217.78" width="638.50" height="1.00" fill="#d3ccd5" />
<rect x="20.50" y="228.90" width="638.50" height="1.00" fill="#d3ccd5" />
<rect x="20.50" y="240.02" width="638.50" height="1.00" fill="#d3ccd5" />
<rect x="20.50" y="251.14" width="638.50" height="1.00" fill="#d3ccd5" />
<rect x="20.50" y="262.27" width="638.50" height="1.00" fill="#d3ccd5" />
<rect x="20.50" y="273.39" width="638.50" height="1.00" fill="#d3ccd5" />
<rect x="20.50" y="284.51" width="638.50" height="1.00" fill="#d3ccd5" />
<rect x="20.50" y="295.64" width="638.50" height="1.00" fill="#d3ccd5" />
<rect x="20.50" y="306.76" width="638.50" height="1.00" fill="#d3ccd5" />
<rect x="20.50" y="317.88" width="638.50" height="1.00" fill="#d3ccd5" />
<rect x="20.50" y="329.01" width="638.50" height="1.00" fill="#d3ccd5" />
<rect x="20.50" y="340.13" width="638.50" height="1.00" fill="#d3ccd5" />
<rect x="20.50" y="351.25" width="638.50" height="1.00" fill="#d3ccd5" />
<rect x="20.50" y="362.38" width="638.50" height="1.00" fill="#d3ccd5" />
<rect x="20.50" y="373.50" width="638.50" height="1.00" fill="#d3ccd5" />
<rect x="20.50" y="384.62" width="638.50" height="1.00" fill="#d3ccd5" />
<rect x="20.50" y="395.74" width="638.50" height="1.00" fill="#d3ccd5" />
<rect x="20.50" y="406.87" width="638.50" height="1.00" fill="#d3ccd5" />
<rect x="20.50" y="417.99" width="638.50" height="1.00" fill="#d3ccd5" />
<rect x="20.50" y="429.11" width="638.50" height="1.00" fill="#d3ccd5" />
<rect x="20.50" y="440.24" width="638.50" height="1.00" fill="#d3ccd5" />
<rect x="20.50" y="451.36" width="638.50" height="1.00" fill="#d3ccd5" />
<rect x="20.50" y="462.48" width="638.50" height="1.00" fill="#d3ccd5" />
<rect x="27.00" y="84.80" width="1.00" height="376.20" fill="#dedade" />
<rect x="125.50" y="84.80" width="1.00" height="376.20" fill="#dedade" />
<rect x="160.10" y="84.80" width="1.00" height="376.20" fill="#dedade" />
<rect x="201.20" y="84.80" width="1.00" height="376.20" fill="#dedade" />
<rect x="242.40" y="84.80" width="1.00" height="376.20" fill="#dedade" />
<rect x="283.60" y="84.80" width="1.00" height="376.20" fill="#dedade" />
<rect x="324.80" y="84.80" width="1.00" height="376.20" fill="#dedade" />
<rect x="366.00" y="84.80" width="1.00" height="376.20" fill="#dedade" />
<rect x="407.20" y="84.80" width="1.00" height="376.20" fill="#dedade" />
<rect x="448.40" y="84.80" width="1.00" height="376.20" fill="#dedade" />
<rect x="489.60" y="84.80" width="1.00" height="376.20" fill="#dedade" />
<rect x="530.80" y="84.80" width="1.00" height="376.20" fill="#dedade" />
<rect x="572.00" y="84.80" width="1.00" height="376.20" fill="#dedade" />
<rect x="613.20" y="84.80" width="1.00" height="376.20" fill="#dedade" />
<rect x="654.40" y="84.80" width="1.00" height="376.20" fill="#dedade" />
<rect x="27.50" y="84.80" width="174.20" height="11.12" fill="#f7f7f7" />
<text x="114.60" y="93.90" font-size="8.6" fill="#000" text-anchor="middle" font-weight="bold"  style="">System variables</text>
<rect x="27.50" y="95.92" width="174.20" height="155.72" fill="#00c8f4" />
<rect x="126.00" y="95.92" width="34.60" height="155.72" fill="#ffff00" />
<text x="29.10" y="104.82" font-size="8.3" fill="#000" text-anchor="start"  style="">Bottle pressure (Pb)</text>
<text x="159.20" y="104.82" font-size="8.3" fill="#000" text-anchor="end"  style="">16</text>
<text x="162.50" y="104.82" font-size="8.3" fill="#000" text-anchor="start"  style="">bars</text>
<path d="M122.20,96.12 h3.6 v3.6z" fill="#ff0000"/>
<text x="29.10" y="115.95" font-size="8.3" fill="#000" text-anchor="start"  style="">Regulator flow (Fr)</text>
<text x="159.20" y="115.95" font-size="8.3" fill="#000" text-anchor="end"  style="">600</text>
<text x="162.50" y="115.95" font-size="8.3" fill="#000" text-anchor="start"  style="">litres/min</text>
<path d="M122.20,107.25 h3.6 v3.6z" fill="#ff0000"/>
<text x="29.10" y="127.07" font-size="8.3" fill="#000" text-anchor="start"  style="">Buffer tank volume (Vt)</text>
<text x="159.20" y="127.07" font-size="8.3" fill="#000" text-anchor="end"  style="">2</text>
<text x="162.50" y="127.07" font-size="8.3" fill="#000" text-anchor="start"  style="">litres</text>
<path d="M122.20,118.37 h3.6 v3.6z" fill="#ff0000"/>
<text x="29.10" y="138.19" font-size="8.3" fill="#000" text-anchor="start"  style="">Valve flow (Fv)</text>
<text x="159.20" y="138.19" font-size="8.3" fill="#000" text-anchor="end"  style="">1722</text>
<text x="162.50" y="138.19" font-size="8.3" fill="#000" text-anchor="start"  style="">litres/min</text>
<path d="M122.20,129.49 h3.6 v3.6z" fill="#ff0000"/>
<text x="29.10" y="149.31" font-size="8.3" fill="#000" text-anchor="start"  style="">Pipe outside diameter</text>
<text x="159.20" y="149.31" font-size="8.3" fill="#000" text-anchor="end"  style="">12</text>
<text x="162.50" y="149.31" font-size="8.3" fill="#000" text-anchor="start"  style="">mm</text>
<path d="M122.20,140.61 h3.6 v3.6z" fill="#ff0000"/>
<text x="29.10" y="160.44" font-size="8.3" fill="#000" text-anchor="start"  style="">Pipe inside diameter</text>
<text x="162.50" y="160.44" font-size="8.3" fill="#000" text-anchor="start"  style="">mm</text>
<path d="M122.20,151.74 h3.6 v3.6z" fill="#ff0000"/>
<text x="29.10" y="171.56" font-size="8.3" fill="#000" text-anchor="start"  style="">Pipe length</text>
<text x="159.20" y="171.56" font-size="8.3" fill="#000" text-anchor="end"  style="">0.1</text>
<text x="162.50" y="171.56" font-size="8.3" fill="#000" text-anchor="start"  style="">m</text>
<path d="M122.20,162.86 h3.6 v3.6z" fill="#ff0000"/>
<text x="29.10" y="182.68" font-size="8.3" fill="#000" text-anchor="start"  style="">Ram bore</text>
<text x="159.20" y="182.68" font-size="8.3" fill="#000" text-anchor="end"  style="">100</text>
<text x="162.50" y="182.68" font-size="8.3" fill="#000" text-anchor="start"  style="">mm</text>
<path d="M122.20,173.98 h3.6 v3.6z" fill="#ff0000"/>
<text x="29.10" y="193.81" font-size="8.3" fill="#000" text-anchor="start"  style="">Ram stroke</text>
<text x="159.20" y="193.81" font-size="8.3" fill="#000" text-anchor="end"  style="">125</text>
<text x="162.50" y="193.81" font-size="8.3" fill="#000" text-anchor="start"  style="">mm</text>
<path d="M122.20,185.11 h3.6 v3.6z" fill="#ff0000"/>
<text x="29.10" y="204.93" font-size="8.3" fill="#000" text-anchor="start"  style="">Number of rams</text>
<text x="159.20" y="204.93" font-size="8.3" fill="#000" text-anchor="end"  style="">1</text>
<path d="M122.20,196.23 h3.6 v3.6z" fill="#ff0000"/>
<text x="29.10" y="216.05" font-size="8.3" fill="#000" text-anchor="start"  style="">Flipper tip moment (Mf)</text>
<text x="159.20" y="216.05" font-size="8.3" fill="#000" text-anchor="end"  style="">0.6</text>
<text x="162.50" y="216.05" font-size="8.3" fill="#000" text-anchor="start"  style="">m</text>
<path d="M122.20,207.35 h3.6 v3.6z" fill="#ff0000"/>
<text x="29.10" y="227.18" font-size="8.3" fill="#000" text-anchor="start"  style="">Ram moment (Mr)</text>
<text x="159.20" y="227.18" font-size="8.3" fill="#000" text-anchor="end"  style="">0.2</text>
<text x="162.50" y="227.18" font-size="8.3" fill="#000" text-anchor="start"  style="">m</text>
<path d="M122.20,218.48 h3.6 v3.6z" fill="#ff0000"/>
<text x="29.10" y="238.30" font-size="8.3" fill="#000" text-anchor="start"  style="">Mass to throw (M)</text>
<text x="159.20" y="238.30" font-size="8.3" fill="#000" text-anchor="end"  style="">100</text>
<text x="162.50" y="238.30" font-size="8.3" fill="#000" text-anchor="start"  style="">kg</text>
<path d="M122.20,229.60 h3.6 v3.6z" fill="#ff0000"/>
<text x="29.10" y="249.42" font-size="8.3" fill="#000" text-anchor="start"  style="">Regulator variation</text>
<text x="159.20" y="249.42" font-size="8.3" fill="#000" text-anchor="end"  style="">5</text>
<text x="162.50" y="249.42" font-size="8.3" fill="#000" text-anchor="start"  style="">%</text>
<path d="M122.20,240.72 h3.6 v3.6z" fill="#ff0000"/>
<rect x="160.10" y="95.92" width="1.00" height="155.72" fill="#202020" />
<rect x="200.90" y="95.92" width="1.00" height="155.72" fill="#202020" />
<rect x="27.50" y="250.84" width="174.20" height="1.00" fill="#202020" />
<rect x="27.20" y="84.80" width="1.00" height="166.84" fill="#303030" />
<rect x="200.90" y="84.80" width="1.00" height="11.12" fill="#505050" />
<rect x="126.00" y="96.12" width="34.60" height="1.00" fill="#202050" />
<rect x="126.20" y="95.92" width="1.00" height="11.12" fill="#2020a0" />
<rect x="159.60" y="95.92" width="1.00" height="10.12" fill="#404060" />
<rect x="126.00" y="105.25" width="33.60" height="1.80" fill="#1a1ad8" />
<rect x="159.00" y="104.85" width="2.40" height="2.60" fill="#1a1ad8" />
<rect x="27.50" y="262.77" width="98.50" height="22.25" fill="#00ff00" />
<rect x="27.50" y="262.77" width="97.90" height="22.25" fill="none" stroke="#303030" stroke-width="0.8"/>
<text x="29.00" y="271.67" font-size="8.3" fill="#000" text-anchor="start"  style="">Narrower graph</text>
<text x="29.00" y="282.79" font-size="8.3" fill="#000" text-anchor="start"  style="">Wider graph</text>
<rect x="112.00" y="263.37" width="12.30" height="10.60" fill="#b8d8bc" />
<rect x="112.00" y="263.37" width="12.30" height="1.00" fill="#eef7ef" />
<rect x="112.00" y="263.37" width="1.00" height="10.60" fill="#eef7ef" />
<rect x="112.00" y="272.97" width="12.30" height="1.00" fill="#6f9f7a" />
<rect x="123.30" y="263.37" width="1.00" height="10.60" fill="#6f9f7a" />
<rect x="112.00" y="273.97" width="13.30" height="1.00" fill="#202020" />
<rect x="124.30" y="263.37" width="1.00" height="11.60" fill="#202020" />
<rect x="112.00" y="274.09" width="12.30" height="10.60" fill="#b8d8bc" />
<rect x="112.00" y="274.09" width="12.30" height="1.00" fill="#eef7ef" />
<rect x="112.00" y="274.09" width="1.00" height="10.60" fill="#eef7ef" />
<rect x="112.00" y="283.69" width="12.30" height="1.00" fill="#6f9f7a" />
<rect x="123.30" y="274.09" width="1.00" height="10.60" fill="#6f9f7a" />
<rect x="112.00" y="284.69" width="13.30" height="1.00" fill="#202020" />
<rect x="124.30" y="274.09" width="1.00" height="11.60" fill="#202020" />
<path d="M115.5,270.07 h5 l-2.5,-2.6z" fill="#000"/>
<path d="M115.5,278.29 h5 l-2.5,2.6z" fill="#000"/>
<rect x="125.20" y="262.97" width="1.00" height="2.50" fill="#ff0000" />
<rect x="27.50" y="318.38" width="174.20" height="66.74" fill="#00c8f4" />
<rect x="126.00" y="318.38" width="34.60" height="66.74" fill="#00ffff" />
<svg x="27.5" y="318.383" width="98.5" height="11.123" overflow="hidden"><text x="1.6" y="8.9" font-size="8.3" fill="#000">Max velocity</text></svg>
<text x="159.20" y="327.28" font-size="8.3" fill="#000" text-anchor="end"  style="">2.87</text>
<text x="162.50" y="327.28" font-size="8.3" fill="#000" text-anchor="start"  style="">m/sec</text>
<path d="M122.20,318.58 h3.6 v3.6z" fill="#ff0000"/>
<svg x="27.5" y="329.506" width="98.5" height="11.123" overflow="hidden"><text x="1.6" y="8.9" font-size="8.3" fill="#000">Max height above flipper</text></svg>
<text x="159.20" y="338.41" font-size="8.3" fill="#000" text-anchor="end"  style="">0.35</text>
<text x="162.50" y="338.41" font-size="8.3" fill="#000" text-anchor="start"  style="">m</text>
<path d="M122.20,329.71 h3.6 v3.6z" fill="#ff0000"/>
<svg x="27.5" y="340.62899999999996" width="98.5" height="11.123" overflow="hidden"><text x="1.6" y="8.9" font-size="8.3" fill="#000">Max height above ground</text></svg>
<text x="159.20" y="349.53" font-size="8.3" fill="#000" text-anchor="end"  style="">0.72</text>
<text x="162.50" y="349.53" font-size="8.3" fill="#000" text-anchor="start"  style="">m</text>
<path d="M122.20,340.83 h3.6 v3.6z" fill="#ff0000"/>
<svg x="27.5" y="351.752" width="98.5" height="11.123" overflow="hidden"><text x="1.6" y="8.9" font-size="8.3" fill="#000">Max weight lifted</text></svg>
<text x="159.20" y="360.65" font-size="8.3" fill="#000" text-anchor="end"  style="">427.92</text>
<text x="162.50" y="360.65" font-size="8.3" fill="#000" text-anchor="start"  style="">kg</text>
<path d="M122.20,351.95 h3.6 v3.6z" fill="#ff0000"/>
<svg x="27.5" y="362.875" width="98.5" height="11.123" overflow="hidden"><text x="1.6" y="8.9" font-size="8.3" fill="#000">Time to lift off</text></svg>
<text x="159.20" y="371.77" font-size="8.3" fill="#000" text-anchor="end"  style="">0.20</text>
<text x="162.50" y="371.77" font-size="8.3" fill="#000" text-anchor="start"  style="">sec</text>
<path d="M122.20,363.07 h3.6 v3.6z" fill="#ff0000"/>
<svg x="27.5" y="373.998" width="98.5" height="11.123" overflow="hidden"><text x="1.6" y="8.9" font-size="8.3" fill="#000">Lift off to max height time</text></svg>
<text x="159.20" y="382.90" font-size="8.3" fill="#000" text-anchor="end"  style="">0.29</text>
<text x="162.50" y="382.90" font-size="8.3" fill="#000" text-anchor="start"  style="">sec</text>
<path d="M122.20,374.20 h3.6 v3.6z" fill="#ff0000"/>
<rect x="27.50" y="318.38" width="173.60" height="66.44" fill="none" stroke="#202020" stroke-width="0.9"/>
<rect x="215.00" y="90.30" width="439.00" height="225.00" fill="#f7f7f7" />
<rect x="215.00" y="90.30" width="439.00" height="1.00" fill="#606060" />
<rect x="215.00" y="90.30" width="1.00" height="225.20" fill="#9a90a0" />
<rect x="653.30" y="90.30" width="1.00" height="225.20" fill="#505050" />
<rect x="215.00" y="314.80" width="439.00" height="1.00" fill="#404040" />
<rect x="276.50" y="140.30" width="360.30" height="126.20" fill="#bcbabe" />
<rect x="276.50" y="250.24" width="360.30" height="1.00" fill="#202020" />
<line x1="273.00" y1="250.74" x2="276.50" y2="250.74" stroke="#000" stroke-width="1" />
<rect x="276.50" y="234.48" width="360.30" height="1.00" fill="#202020" />
<line x1="273.00" y1="234.98" x2="276.50" y2="234.98" stroke="#000" stroke-width="1" />
<rect x="276.50" y="218.72" width="360.30" height="1.00" fill="#202020" />
<line x1="273.00" y1="219.22" x2="276.50" y2="219.22" stroke="#000" stroke-width="1" />
<rect x="276.50" y="202.96" width="360.30" height="1.00" fill="#202020" />
<line x1="273.00" y1="203.46" x2="276.50" y2="203.46" stroke="#000" stroke-width="1" />
<rect x="276.50" y="187.20" width="360.30" height="1.00" fill="#202020" />
<line x1="273.00" y1="187.70" x2="276.50" y2="187.70" stroke="#000" stroke-width="1" />
<rect x="276.50" y="171.44" width="360.30" height="1.00" fill="#202020" />
<line x1="273.00" y1="171.94" x2="276.50" y2="171.94" stroke="#000" stroke-width="1" />
<rect x="276.50" y="155.68" width="360.30" height="1.00" fill="#202020" />
<line x1="273.00" y1="156.18" x2="276.50" y2="156.18" stroke="#000" stroke-width="1" />
<rect x="276.50" y="139.92" width="360.30" height="1.00" fill="#202020" />
<line x1="273.00" y1="140.42" x2="276.50" y2="140.42" stroke="#000" stroke-width="1" />
<rect x="276.50" y="140.30" width="360.30" height="126.20" fill="none" stroke="#707070" stroke-width="0.8"/>
<line x1="276.50" y1="140.30" x2="276.50" y2="267.00" stroke="#000" stroke-width="1.2" />
<line x1="276.50" y1="266.50" x2="636.80" y2="266.50" stroke="#000" stroke-width="1.2" />
<line x1="273.00" y1="266.50" x2="276.50" y2="266.50" stroke="#000" stroke-width="1" />
<line x1="276.50" y1="266.50" x2="276.50" y2="269.70" stroke="#000" stroke-width="0.8" />
<line x1="280.00" y1="266.50" x2="280.00" y2="269.70" stroke="#000" stroke-width="0.8" />
<line x1="283.50" y1="266.50" x2="283.50" y2="269.70" stroke="#000" stroke-width="0.8" />
<line x1="286.99" y1="266.50" x2="286.99" y2="269.70" stroke="#000" stroke-width="0.8" />
<line x1="290.49" y1="266.50" x2="290.49" y2="269.70" stroke="#000" stroke-width="0.8" />
<line x1="293.99" y1="266.50" x2="293.99" y2="269.70" stroke="#000" stroke-width="0.8" />
<line x1="297.49" y1="266.50" x2="297.49" y2="269.70" stroke="#000" stroke-width="0.8" />
<line x1="300.99" y1="266.50" x2="300.99" y2="269.70" stroke="#000" stroke-width="0.8" />
<line x1="304.48" y1="266.50" x2="304.48" y2="269.70" stroke="#000" stroke-width="0.8" />
<line x1="307.98" y1="266.50" x2="307.98" y2="269.70" stroke="#000" stroke-width="0.8" />
<line x1="311.48" y1="266.50" x2="311.48" y2="269.70" stroke="#000" stroke-width="0.8" />
<line x1="314.98" y1="266.50" x2="314.98" y2="269.70" stroke="#000" stroke-width="0.8" />
<line x1="318.48" y1="266.50" x2="318.48" y2="269.70" stroke="#000" stroke-width="0.8" />
<line x1="321.97" y1="266.50" x2="321.97" y2="269.70" stroke="#000" stroke-width="0.8" />
<line x1="325.47" y1="266.50" x2="325.47" y2="269.70" stroke="#000" stroke-width="0.8" />
<line x1="328.97" y1="266.50" x2="328.97" y2="269.70" stroke="#000" stroke-width="0.8" />
<line x1="332.47" y1="266.50" x2="332.47" y2="269.70" stroke="#000" stroke-width="0.8" />
<line x1="335.97" y1="266.50" x2="335.97" y2="269.70" stroke="#000" stroke-width="0.8" />
<line x1="339.46" y1="266.50" x2="339.46" y2="269.70" stroke="#000" stroke-width="0.8" />
<line x1="342.96" y1="266.50" x2="342.96" y2="269.70" stroke="#000" stroke-width="0.8" />
<line x1="346.46" y1="266.50" x2="346.46" y2="269.70" stroke="#000" stroke-width="0.8" />
<line x1="349.96" y1="266.50" x2="349.96" y2="269.70" stroke="#000" stroke-width="0.8" />
<line x1="353.46" y1="266.50" x2="353.46" y2="269.70" stroke="#000" stroke-width="0.8" />
<line x1="356.95" y1="266.50" x2="356.95" y2="269.70" stroke="#000" stroke-width="0.8" />
<line x1="360.45" y1="266.50" x2="360.45" y2="269.70" stroke="#000" stroke-width="0.8" />
<line x1="363.95" y1="266.50" x2="363.95" y2="269.70" stroke="#000" stroke-width="0.8" />
<line x1="367.45" y1="266.50" x2="367.45" y2="269.70" stroke="#000" stroke-width="0.8" />
<line x1="370.95" y1="266.50" x2="370.95" y2="269.70" stroke="#000" stroke-width="0.8" />
<line x1="374.44" y1="266.50" x2="374.44" y2="269.70" stroke="#000" stroke-width="0.8" />
<line x1="377.94" y1="266.50" x2="377.94" y2="269.70" stroke="#000" stroke-width="0.8" />
<line x1="381.44" y1="266.50" x2="381.44" y2="269.70" stroke="#000" stroke-width="0.8" />
<line x1="384.94" y1="266.50" x2="384.94" y2="269.70" stroke="#000" stroke-width="0.8" />
<line x1="388.44" y1="266.50" x2="388.44" y2="269.70" stroke="#000" stroke-width="0.8" />
<line x1="391.93" y1="266.50" x2="391.93" y2="269.70" stroke="#000" stroke-width="0.8" />
<line x1="395.43" y1="266.50" x2="395.43" y2="269.70" stroke="#000" stroke-width="0.8" />
<line x1="398.93" y1="266.50" x2="398.93" y2="269.70" stroke="#000" stroke-width="0.8" />
<line x1="402.43" y1="266.50" x2="402.43" y2="269.70" stroke="#000" stroke-width="0.8" />
<line x1="405.93" y1="266.50" x2="405.93" y2="269.70" stroke="#000" stroke-width="0.8" />
<line x1="409.42" y1="266.50" x2="409.42" y2="269.70" stroke="#000" stroke-width="0.8" />
<line x1="412.92" y1="266.50" x2="412.92" y2="269.70" stroke="#000" stroke-width="0.8" />
<line x1="416.42" y1="266.50" x2="416.42" y2="269.70" stroke="#000" stroke-width="0.8" />
<line x1="419.92" y1="266.50" x2="419.92" y2="269.70" stroke="#000" stroke-width="0.8" />
<line x1="423.42" y1="266.50" x2="423.42" y2="269.70" stroke="#000" stroke-width="0.8" />
<line x1="426.91" y1="266.50" x2="426.91" y2="269.70" stroke="#000" stroke-width="0.8" />
<line x1="430.41" y1="266.50" x2="430.41" y2="269.70" stroke="#000" stroke-width="0.8" />
<line x1="433.91" y1="266.50" x2="433.91" y2="269.70" stroke="#000" stroke-width="0.8" />
<line x1="437.41" y1="266.50" x2="437.41" y2="269.70" stroke="#000" stroke-width="0.8" />
<line x1="440.91" y1="266.50" x2="440.91" y2="269.70" stroke="#000" stroke-width="0.8" />
<line x1="444.40" y1="266.50" x2="444.40" y2="269.70" stroke="#000" stroke-width="0.8" />
<line x1="447.90" y1="266.50" x2="447.90" y2="269.70" stroke="#000" stroke-width="0.8" />
<line x1="451.40" y1="266.50" x2="451.40" y2="269.70" stroke="#000" stroke-width="0.8" />
<line x1="454.90" y1="266.50" x2="454.90" y2="269.70" stroke="#000" stroke-width="0.8" />
<line x1="458.40" y1="266.50" x2="458.40" y2="269.70" stroke="#000" stroke-width="0.8" />
<line x1="461.89" y1="266.50" x2="461.89" y2="269.70" stroke="#000" stroke-width="0.8" />
<line x1="465.39" y1="266.50" x2="465.39" y2="269.70" stroke="#000" stroke-width="0.8" />
<line x1="468.89" y1="266.50" x2="468.89" y2="269.70" stroke="#000" stroke-width="0.8" />
<line x1="472.39" y1="266.50" x2="472.39" y2="269.70" stroke="#000" stroke-width="0.8" />
<line x1="475.89" y1="266.50" x2="475.89" y2="269.70" stroke="#000" stroke-width="0.8" />
<line x1="479.38" y1="266.50" x2="479.38" y2="269.70" stroke="#000" stroke-width="0.8" />
<line x1="482.88" y1="266.50" x2="482.88" y2="269.70" stroke="#000" stroke-width="0.8" />
<line x1="486.38" y1="266.50" x2="486.38" y2="269.70" stroke="#000" stroke-width="0.8" />
<line x1="489.88" y1="266.50" x2="489.88" y2="269.70" stroke="#000" stroke-width="0.8" />
<line x1="493.38" y1="266.50" x2="493.38" y2="269.70" stroke="#000" stroke-width="0.8" />
<line x1="496.87" y1="266.50" x2="496.87" y2="269.70" stroke="#000" stroke-width="0.8" />
<line x1="500.37" y1="266.50" x2="500.37" y2="269.70" stroke="#000" stroke-width="0.8" />
<line x1="503.87" y1="266.50" x2="503.87" y2="269.70" stroke="#000" stroke-width="0.8" />
<line x1="507.37" y1="266.50" x2="507.37" y2="269.70" stroke="#000" stroke-width="0.8" />
<line x1="510.87" y1="266.50" x2="510.87" y2="269.70" stroke="#000" stroke-width="0.8" />
<line x1="514.36" y1="266.50" x2="514.36" y2="269.70" stroke="#000" stroke-width="0.8" />
<line x1="517.86" y1="266.50" x2="517.86" y2="269.70" stroke="#000" stroke-width="0.8" />
<line x1="521.36" y1="266.50" x2="521.36" y2="269.70" stroke="#000" stroke-width="0.8" />
<line x1="524.86" y1="266.50" x2="524.86" y2="269.70" stroke="#000" stroke-width="0.8" />
<line x1="528.36" y1="266.50" x2="528.36" y2="269.70" stroke="#000" stroke-width="0.8" />
<line x1="531.85" y1="266.50" x2="531.85" y2="269.70" stroke="#000" stroke-width="0.8" />
<line x1="535.35" y1="266.50" x2="535.35" y2="269.70" stroke="#000" stroke-width="0.8" />
<line x1="538.85" y1="266.50" x2="538.85" y2="269.70" stroke="#000" stroke-width="0.8" />
<line x1="542.35" y1="266.50" x2="542.35" y2="269.70" stroke="#000" stroke-width="0.8" />
<line x1="545.85" y1="266.50" x2="545.85" y2="269.70" stroke="#000" stroke-width="0.8" />
<line x1="549.34" y1="266.50" x2="549.34" y2="269.70" stroke="#000" stroke-width="0.8" />
<line x1="552.84" y1="266.50" x2="552.84" y2="269.70" stroke="#000" stroke-width="0.8" />
<line x1="556.34" y1="266.50" x2="556.34" y2="269.70" stroke="#000" stroke-width="0.8" />
<line x1="559.84" y1="266.50" x2="559.84" y2="269.70" stroke="#000" stroke-width="0.8" />
<line x1="563.34" y1="266.50" x2="563.34" y2="269.70" stroke="#000" stroke-width="0.8" />
<line x1="566.83" y1="266.50" x2="566.83" y2="269.70" stroke="#000" stroke-width="0.8" />
<line x1="570.33" y1="266.50" x2="570.33" y2="269.70" stroke="#000" stroke-width="0.8" />
<line x1="573.83" y1="266.50" x2="573.83" y2="269.70" stroke="#000" stroke-width="0.8" />
<line x1="577.33" y1="266.50" x2="577.33" y2="269.70" stroke="#000" stroke-width="0.8" />
<line x1="580.83" y1="266.50" x2="580.83" y2="269.70" stroke="#000" stroke-width="0.8" />
<line x1="584.32" y1="266.50" x2="584.32" y2="269.70" stroke="#000" stroke-width="0.8" />
<line x1="587.82" y1="266.50" x2="587.82" y2="269.70" stroke="#000" stroke-width="0.8" />
<line x1="591.32" y1="266.50" x2="591.32" y2="269.70" stroke="#000" stroke-width="0.8" />
<line x1="594.82" y1="266.50" x2="594.82" y2="269.70" stroke="#000" stroke-width="0.8" />
<line x1="598.32" y1="266.50" x2="598.32" y2="269.70" stroke="#000" stroke-width="0.8" />
<line x1="601.81" y1="266.50" x2="601.81" y2="269.70" stroke="#000" stroke-width="0.8" />
<line x1="605.31" y1="266.50" x2="605.31" y2="269.70" stroke="#000" stroke-width="0.8" />
<line x1="608.81" y1="266.50" x2="608.81" y2="269.70" stroke="#000" stroke-width="0.8" />
<line x1="612.31" y1="266.50" x2="612.31" y2="269.70" stroke="#000" stroke-width="0.8" />
<line x1="615.81" y1="266.50" x2="615.81" y2="269.70" stroke="#000" stroke-width="0.8" />
<line x1="619.30" y1="266.50" x2="619.30" y2="269.70" stroke="#000" stroke-width="0.8" />
<line x1="622.80" y1="266.50" x2="622.80" y2="269.70" stroke="#000" stroke-width="0.8" />
<line x1="626.30" y1="266.50" x2="626.30" y2="269.70" stroke="#000" stroke-width="0.8" />
<line x1="629.80" y1="266.50" x2="629.80" y2="269.70" stroke="#000" stroke-width="0.8" />
<line x1="633.30" y1="266.50" x2="633.30" y2="269.70" stroke="#000" stroke-width="0.8" />
<line x1="636.79" y1="266.50" x2="636.79" y2="269.70" stroke="#000" stroke-width="0.8" />
<text x="267.20" y="270.10" font-size="10" fill="#202020" text-anchor="end"  style="">0.00</text>
<text x="267.20" y="254.34" font-size="10" fill="#202020" text-anchor="end"  style="">0.10</text>
<text x="267.20" y="238.58" font-size="10" fill="#202020" text-anchor="end"  style="">0.20</text>
<text x="267.20" y="222.82" font-size="10" fill="#202020" text-anchor="end"  style="">0.30</text>
<text x="267.20" y="207.06" font-size="10" fill="#202020" text-anchor="end"  style="">0.40</text>
<text x="267.20" y="191.30" font-size="10" fill="#202020" text-anchor="end"  style="">0.50</text>
<text x="267.20" y="175.54" font-size="10" fill="#202020" text-anchor="end"  style="">0.60</text>
<text x="267.20" y="159.78" font-size="10" fill="#202020" text-anchor="end"  style="">0.70</text>
<text x="267.20" y="144.02" font-size="10" fill="#202020" text-anchor="end"  style="">0.80</text>
<text x="0" y="0" font-size="10" fill="#202020" text-anchor="end" transform="translate(280.10,275.80) rotate(-90)">0.00</text>
<text x="0" y="0" font-size="10" fill="#202020" text-anchor="end" transform="translate(297.59,275.80) rotate(-90)">0.10</text>
<text x="0" y="0" font-size="10" fill="#202020" text-anchor="end" transform="translate(315.08,275.80) rotate(-90)">0.20</text>
<text x="0" y="0" font-size="10" fill="#202020" text-anchor="end" transform="translate(332.57,275.80) rotate(-90)">0.30</text>
<text x="0" y="0" font-size="10" fill="#202020" text-anchor="end" transform="translate(350.06,275.80) rotate(-90)">0.40</text>
<text x="0" y="0" font-size="10" fill="#202020" text-anchor="end" transform="translate(367.55,275.80) rotate(-90)">0.50</text>
<text x="0" y="0" font-size="10" fill="#202020" text-anchor="end" transform="translate(385.04,275.80) rotate(-90)">0.60</text>
<text x="0" y="0" font-size="10" fill="#202020" text-anchor="end" transform="translate(402.53,275.80) rotate(-90)">0.70</text>
<text x="0" y="0" font-size="10" fill="#202020" text-anchor="end" transform="translate(420.02,275.80) rotate(-90)">0.80</text>
<text x="0" y="0" font-size="10" fill="#202020" text-anchor="end" transform="translate(437.51,275.80) rotate(-90)">0.90</text>
<text x="0" y="0" font-size="10" fill="#202020" text-anchor="end" transform="translate(455.00,275.80) rotate(-90)">1.00</text>
<text x="0" y="0" font-size="10" fill="#202020" text-anchor="end" transform="translate(472.49,275.80) rotate(-90)">1.10</text>
<text x="0" y="0" font-size="10" fill="#202020" text-anchor="end" transform="translate(489.98,275.80) rotate(-90)">1.20</text>
<text x="0" y="0" font-size="10" fill="#202020" text-anchor="end" transform="translate(507.47,275.80) rotate(-90)">1.30</text>
<text x="0" y="0" font-size="10" fill="#202020" text-anchor="end" transform="translate(524.96,275.80) rotate(-90)">1.40</text>
<text x="0" y="0" font-size="10" fill="#202020" text-anchor="end" transform="translate(542.45,275.80) rotate(-90)">1.50</text>
<text x="0" y="0" font-size="10" fill="#202020" text-anchor="end" transform="translate(559.94,275.80) rotate(-90)">1.60</text>
<text x="0" y="0" font-size="10" fill="#202020" text-anchor="end" transform="translate(577.43,275.80) rotate(-90)">1.70</text>
<text x="0" y="0" font-size="10" fill="#202020" text-anchor="end" transform="translate(594.92,275.80) rotate(-90)">1.80</text>
<text x="0" y="0" font-size="10" fill="#202020" text-anchor="end" transform="translate(612.41,275.80) rotate(-90)">1.90</text>
<text x="0" y="0" font-size="10" fill="#202020" text-anchor="end" transform="translate(629.90,275.80) rotate(-90)">2.00</text>
<text x="0" y="0" font-size="10.2" font-weight="bold" text-anchor="middle" transform="translate(238.10,203.00) rotate(-90)">Height (metres)</text>
<text x="456.00" y="306.80" font-size="10.5" fill="#000" text-anchor="middle" font-weight="bold"  style="">Secs</text>
<polyline points="276.50,266.50 280.00,265.58 283.50,262.96 286.99,258.87 290.49,253.53 293.99,247.16 297.49,239.98 300.99,232.22 304.48,224.09 307.98,215.82 311.48,207.62 314.98,199.84 318.48,192.68 321.97,186.13 325.47,180.20 328.97,174.89 332.47,170.21 335.97,166.13 339.46,162.68 342.96,159.85 346.46,157.63 349.96,156.03 353.46,155.05 356.95,154.69 360.45,154.95 363.95,155.83 367.45,157.32 370.95,159.43 374.44,162.16 377.94,165.51 381.44,169.48 384.94,174.07 388.44,179.27 391.93,185.10 395.43,191.54 398.93,198.60 402.43,206.28 405.93,214.57 409.42,223.49 412.92,233.02 416.42,243.18 419.92,253.95 423.42,265.34 426.91,266.50 430.41,266.50 433.91,266.50 437.41,266.50 440.91,266.50 444.40,266.50 447.90,266.50 451.40,266.50 454.90,266.50 458.40,266.50 461.89,266.50 465.39,266.50 468.89,266.50 472.39,266.50 475.89,266.50 479.38,266.50 482.88,266.50 486.38,266.50 489.88,266.50 493.38,266.50 496.87,266.50 500.37,266.50 503.87,266.50 507.37,266.50 510.87,266.50 514.36,266.50 517.86,266.50 521.36,266.50 524.86,266.50 528.36,266.50 531.85,266.50 535.35,266.50 538.85,266.50 542.35,266.50 545.85,266.50 549.34,266.50 552.84,266.50 556.34,266.50 559.84,266.50 563.34,266.50 566.83,266.50 570.33,266.50 573.83,266.50 577.33,266.50 580.83,266.50 584.32,266.50 587.82,266.50 591.32,266.50 594.82,266.50 598.32,266.50 601.81,266.50 605.31,266.50 608.81,266.50 612.31,266.50 615.81,266.50 619.30,266.50 622.80,266.50 626.30,266.50 629.80,266.50 633.30,266.50 636.79,266.50" fill="none" stroke="#ff00ff" stroke-width="2.2" stroke-linejoin="round"/>
<polyline points="276.50,266.50 280.00,265.58 283.50,262.96 286.99,258.87 290.49,253.53 293.99,247.16 297.49,239.98 300.99,232.22 304.48,224.09 307.98,215.82 311.48,207.62 314.98,207.62 318.48,207.62 321.97,207.62 325.47,207.62 328.97,207.62 332.47,207.62 335.97,207.62 339.46,207.62 342.96,207.62 346.46,207.62 349.96,207.62 353.46,207.62 356.95,207.62 360.45,207.62 363.95,207.62 367.45,207.62 370.95,207.62 374.44,207.62 377.94,207.62 381.44,207.62 384.94,207.62 388.44,207.62 391.93,207.62 395.43,207.62 398.93,207.62 402.43,207.62 405.93,207.62 409.42,207.62 412.92,207.62 416.42,207.62 419.92,207.62 423.42,207.62 426.91,207.62 430.41,207.62 433.91,207.62 437.41,207.62 440.91,207.62 444.40,207.62 447.90,207.62 451.40,207.62 454.90,207.62 458.40,207.62 461.89,207.62 465.39,207.62 468.89,207.62 472.39,207.62 475.89,207.62 479.38,207.62 482.88,207.62 486.38,207.62 489.88,207.62 493.38,207.62 496.87,207.62 500.37,207.62 503.87,207.62 507.37,207.62 510.87,207.62 514.36,207.62 517.86,207.62 521.36,207.62 524.86,207.62 528.36,207.62 531.85,207.62 535.35,207.62 538.85,207.62 542.35,207.62 545.85,207.62 549.34,207.62 552.84,207.62 556.34,207.62 559.84,207.62 563.34,207.62 566.83,207.62 570.33,207.62 573.83,207.62 577.33,207.62 580.83,207.62 584.32,207.62 587.82,207.62 591.32,207.62 594.82,207.62 598.32,207.62 601.81,207.62 605.31,207.62 608.81,207.62 612.31,207.62 615.81,207.62 619.30,207.62 622.80,207.62 626.30,207.62 629.80,207.62 633.30,207.62 636.79,207.62" fill="none" stroke="#000080" stroke-width="1"/>
<path d="M274.20,266.50 L276.50,264.20 L278.80,266.50 L276.50,268.80z" fill="#000080"/>
<path d="M277.70,265.58 L280.00,263.28 L282.30,265.58 L280.00,267.88z" fill="#000080"/>
<path d="M281.20,262.96 L283.50,260.66 L285.80,262.96 L283.50,265.26z" fill="#000080"/>
<path d="M284.69,258.87 L286.99,256.57 L289.29,258.87 L286.99,261.17z" fill="#000080"/>
<path d="M288.19,253.53 L290.49,251.23 L292.79,253.53 L290.49,255.83z" fill="#000080"/>
<path d="M291.69,247.16 L293.99,244.86 L296.29,247.16 L293.99,249.46z" fill="#000080"/>
<path d="M295.19,239.98 L297.49,237.68 L299.79,239.98 L297.49,242.28z" fill="#000080"/>
<path d="M298.69,232.22 L300.99,229.92 L303.29,232.22 L300.99,234.52z" fill="#000080"/>
<path d="M302.18,224.09 L304.48,221.79 L306.78,224.09 L304.48,226.39z" fill="#000080"/>
<path d="M305.68,215.82 L307.98,213.52 L310.28,215.82 L307.98,218.12z" fill="#000080"/>
<path d="M309.18,207.62 L311.48,205.32 L313.78,207.62 L311.48,209.92z" fill="#000080"/>
<path d="M312.68,207.62 L314.98,205.32 L317.28,207.62 L314.98,209.92z" fill="#000080"/>
<path d="M316.18,207.62 L318.48,205.32 L320.78,207.62 L318.48,209.92z" fill="#000080"/>
<path d="M319.67,207.62 L321.97,205.32 L324.27,207.62 L321.97,209.92z" fill="#000080"/>
<path d="M323.17,207.62 L325.47,205.32 L327.77,207.62 L325.47,209.92z" fill="#000080"/>
<path d="M326.67,207.62 L328.97,205.32 L331.27,207.62 L328.97,209.92z" fill="#000080"/>
<path d="M330.17,207.62 L332.47,205.32 L334.77,207.62 L332.47,209.92z" fill="#000080"/>
<path d="M333.67,207.62 L335.97,205.32 L338.27,207.62 L335.97,209.92z" fill="#000080"/>
<path d="M337.16,207.62 L339.46,205.32 L341.76,207.62 L339.46,209.92z" fill="#000080"/>
<path d="M340.66,207.62 L342.96,205.32 L345.26,207.62 L342.96,209.92z" fill="#000080"/>
<path d="M344.16,207.62 L346.46,205.32 L348.76,207.62 L346.46,209.92z" fill="#000080"/>
<path d="M347.66,207.62 L349.96,205.32 L352.26,207.62 L349.96,209.92z" fill="#000080"/>
<path d="M351.16,207.62 L353.46,205.32 L355.76,207.62 L353.46,209.92z" fill="#000080"/>
<path d="M354.65,207.62 L356.95,205.32 L359.25,207.62 L356.95,209.92z" fill="#000080"/>
<path d="M358.15,207.62 L360.45,205.32 L362.75,207.62 L360.45,209.92z" fill="#000080"/>
<path d="M361.65,207.62 L363.95,205.32 L366.25,207.62 L363.95,209.92z" fill="#000080"/>
<path d="M365.15,207.62 L367.45,205.32 L369.75,207.62 L367.45,209.92z" fill="#000080"/>
<path d="M368.65,207.62 L370.95,205.32 L373.25,207.62 L370.95,209.92z" fill="#000080"/>
<path d="M372.14,207.62 L374.44,205.32 L376.74,207.62 L374.44,209.92z" fill="#000080"/>
<path d="M375.64,207.62 L377.94,205.32 L380.24,207.62 L377.94,209.92z" fill="#000080"/>
<path d="M379.14,207.62 L381.44,205.32 L383.74,207.62 L381.44,209.92z" fill="#000080"/>
<path d="M382.64,207.62 L384.94,205.32 L387.24,207.62 L384.94,209.92z" fill="#000080"/>
<path d="M386.14,207.62 L388.44,205.32 L390.74,207.62 L388.44,209.92z" fill="#000080"/>
<path d="M389.63,207.62 L391.93,205.32 L394.23,207.62 L391.93,209.92z" fill="#000080"/>
<path d="M393.13,207.62 L395.43,205.32 L397.73,207.62 L395.43,209.92z" fill="#000080"/>
<path d="M396.63,207.62 L398.93,205.32 L401.23,207.62 L398.93,209.92z" fill="#000080"/>
<path d="M400.13,207.62 L402.43,205.32 L404.73,207.62 L402.43,209.92z" fill="#000080"/>
<path d="M403.63,207.62 L405.93,205.32 L408.23,207.62 L405.93,209.92z" fill="#000080"/>
<path d="M407.12,207.62 L409.42,205.32 L411.72,207.62 L409.42,209.92z" fill="#000080"/>
<path d="M410.62,207.62 L412.92,205.32 L415.22,207.62 L412.92,209.92z" fill="#000080"/>
<path d="M414.12,207.62 L416.42,205.32 L418.72,207.62 L416.42,209.92z" fill="#000080"/>
<path d="M417.62,207.62 L419.92,205.32 L422.22,207.62 L419.92,209.92z" fill="#000080"/>
<path d="M421.12,207.62 L423.42,205.32 L425.72,207.62 L423.42,209.92z" fill="#000080"/>
<path d="M424.61,207.62 L426.91,205.32 L429.21,207.62 L426.91,209.92z" fill="#000080"/>
<path d="M428.11,207.62 L430.41,205.32 L432.71,207.62 L430.41,209.92z" fill="#000080"/>
<path d="M431.61,207.62 L433.91,205.32 L436.21,207.62 L433.91,209.92z" fill="#000080"/>
<path d="M435.11,207.62 L437.41,205.32 L439.71,207.62 L437.41,209.92z" fill="#000080"/>
<path d="M438.61,207.62 L440.91,205.32 L443.21,207.62 L440.91,209.92z" fill="#000080"/>
<path d="M442.10,207.62 L444.40,205.32 L446.70,207.62 L444.40,209.92z" fill="#000080"/>
<path d="M445.60,207.62 L447.90,205.32 L450.20,207.62 L447.90,209.92z" fill="#000080"/>
<path d="M449.10,207.62 L451.40,205.32 L453.70,207.62 L451.40,209.92z" fill="#000080"/>
<path d="M452.60,207.62 L454.90,205.32 L457.20,207.62 L454.90,209.92z" fill="#000080"/>
<path d="M456.10,207.62 L458.40,205.32 L460.70,207.62 L458.40,209.92z" fill="#000080"/>
<path d="M459.59,207.62 L461.89,205.32 L464.19,207.62 L461.89,209.92z" fill="#000080"/>
<path d="M463.09,207.62 L465.39,205.32 L467.69,207.62 L465.39,209.92z" fill="#000080"/>
<path d="M466.59,207.62 L468.89,205.32 L471.19,207.62 L468.89,209.92z" fill="#000080"/>
<path d="M470.09,207.62 L472.39,205.32 L474.69,207.62 L472.39,209.92z" fill="#000080"/>
<path d="M473.59,207.62 L475.89,205.32 L478.19,207.62 L475.89,209.92z" fill="#000080"/>
<path d="M477.08,207.62 L479.38,205.32 L481.68,207.62 L479.38,209.92z" fill="#000080"/>
<path d="M480.58,207.62 L482.88,205.32 L485.18,207.62 L482.88,209.92z" fill="#000080"/>
<path d="M484.08,207.62 L486.38,205.32 L488.68,207.62 L486.38,209.92z" fill="#000080"/>
<path d="M487.58,207.62 L489.88,205.32 L492.18,207.62 L489.88,209.92z" fill="#000080"/>
<path d="M491.08,207.62 L493.38,205.32 L495.68,207.62 L493.38,209.92z" fill="#000080"/>
<path d="M494.57,207.62 L496.87,205.32 L499.17,207.62 L496.87,209.92z" fill="#000080"/>
<path d="M498.07,207.62 L500.37,205.32 L502.67,207.62 L500.37,209.92z" fill="#000080"/>
<path d="M501.57,207.62 L503.87,205.32 L506.17,207.62 L503.87,209.92z" fill="#000080"/>
<path d="M505.07,207.62 L507.37,205.32 L509.67,207.62 L507.37,209.92z" fill="#000080"/>
<path d="M508.57,207.62 L510.87,205.32 L513.17,207.62 L510.87,209.92z" fill="#000080"/>
<path d="M512.06,207.62 L514.36,205.32 L516.66,207.62 L514.36,209.92z" fill="#000080"/>
<path d="M515.56,207.62 L517.86,205.32 L520.16,207.62 L517.86,209.92z" fill="#000080"/>
<path d="M519.06,207.62 L521.36,205.32 L523.66,207.62 L521.36,209.92z" fill="#000080"/>
<path d="M522.56,207.62 L524.86,205.32 L527.16,207.62 L524.86,209.92z" fill="#000080"/>
<path d="M526.06,207.62 L528.36,205.32 L530.66,207.62 L528.36,209.92z" fill="#000080"/>
<path d="M529.55,207.62 L531.85,205.32 L534.15,207.62 L531.85,209.92z" fill="#000080"/>
<path d="M533.05,207.62 L535.35,205.32 L537.65,207.62 L535.35,209.92z" fill="#000080"/>
<path d="M536.55,207.62 L538.85,205.32 L541.15,207.62 L538.85,209.92z" fill="#000080"/>
<path d="M540.05,207.62 L542.35,205.32 L544.65,207.62 L542.35,209.92z" fill="#000080"/>
<path d="M543.55,207.62 L545.85,205.32 L548.15,207.62 L545.85,209.92z" fill="#000080"/>
<path d="M547.04,207.62 L549.34,205.32 L551.64,207.62 L549.34,209.92z" fill="#000080"/>
<path d="M550.54,207.62 L552.84,205.32 L555.14,207.62 L552.84,209.92z" fill="#000080"/>
<path d="M554.04,207.62 L556.34,205.32 L558.64,207.62 L556.34,209.92z" fill="#000080"/>
<path d="M557.54,207.62 L559.84,205.32 L562.14,207.62 L559.84,209.92z" fill="#000080"/>
<path d="M561.04,207.62 L563.34,205.32 L565.64,207.62 L563.34,209.92z" fill="#000080"/>
<path d="M564.53,207.62 L566.83,205.32 L569.13,207.62 L566.83,209.92z" fill="#000080"/>
<path d="M568.03,207.62 L570.33,205.32 L572.63,207.62 L570.33,209.92z" fill="#000080"/>
<path d="M571.53,207.62 L573.83,205.32 L576.13,207.62 L573.83,209.92z" fill="#000080"/>
<path d="M575.03,207.62 L577.33,205.32 L579.63,207.62 L577.33,209.92z" fill="#000080"/>
<path d="M578.53,207.62 L580.83,205.32 L583.13,207.62 L580.83,209.92z" fill="#000080"/>
<path d="M582.02,207.62 L584.32,205.32 L586.62,207.62 L584.32,209.92z" fill="#000080"/>
<path d="M585.52,207.62 L587.82,205.32 L590.12,207.62 L587.82,209.92z" fill="#000080"/>
<path d="M589.02,207.62 L591.32,205.32 L593.62,207.62 L591.32,209.92z" fill="#000080"/>
<path d="M592.52,207.62 L594.82,205.32 L597.12,207.62 L594.82,209.92z" fill="#000080"/>
<path d="M596.02,207.62 L598.32,205.32 L600.62,207.62 L598.32,209.92z" fill="#000080"/>
<path d="M599.51,207.62 L601.81,205.32 L604.11,207.62 L601.81,209.92z" fill="#000080"/>
<path d="M603.01,207.62 L605.31,205.32 L607.61,207.62 L605.31,209.92z" fill="#000080"/>
<path d="M606.51,207.62 L608.81,205.32 L611.11,207.62 L608.81,209.92z" fill="#000080"/>
<path d="M610.01,207.62 L612.31,205.32 L614.61,207.62 L612.31,209.92z" fill="#000080"/>
<path d="M613.51,207.62 L615.81,205.32 L618.11,207.62 L615.81,209.92z" fill="#000080"/>
<path d="M617.00,207.62 L619.30,205.32 L621.60,207.62 L619.30,209.92z" fill="#000080"/>
<path d="M620.50,207.62 L622.80,205.32 L625.10,207.62 L622.80,209.92z" fill="#000080"/>
<path d="M624.00,207.62 L626.30,205.32 L628.60,207.62 L626.30,209.92z" fill="#000080"/>
<path d="M627.50,207.62 L629.80,205.32 L632.10,207.62 L629.80,209.92z" fill="#000080"/>
<path d="M631.00,207.62 L633.30,205.32 L635.60,207.62 L633.30,209.92z" fill="#000080"/>
<path d="M634.49,207.62 L636.79,205.32 L639.09,207.62 L636.79,209.92z" fill="#000080"/>
<rect x="390.40" y="97.20" width="97.10" height="31.00" fill="#f7f7f7" />
<rect x="390.9" y="97.7" width="96.3" height="30.3" fill="none" stroke="#484848" stroke-width="1"/>
<line x1="394.30" y1="106.50" x2="413.20" y2="106.50" stroke="#000080" stroke-width="1" />
<path d="M401.8,106.5 L403.8,104.5 L405.8,106.5 L403.8,108.5z" fill="#000080"/>
<line x1="394.30" y1="121.40" x2="413.20" y2="121.40" stroke="#ff00ff" stroke-width="2" />
<text x="415.00" y="110.00" font-size="10.2" fill="#202020" text-anchor="start"  style="">Flipper height</text>
<text x="415.00" y="125.00" font-size="10.2" fill="#202020" text-anchor="start"  style="">Mass trajectory</text>
<rect x="215.00" y="320.50" width="440.00" height="139.00" fill="#f7f7f7" />
<rect x="215.5" y="321" width="439" height="138" fill="none" stroke="#101010" stroke-width="1"/>
<rect x="278.80" y="350.10" width="359.10" height="82.10" fill="#bcbabe" />
<rect x="278.80" y="422.58" width="359.10" height="1.00" fill="#202020" />
<line x1="275.50" y1="423.08" x2="278.80" y2="423.08" stroke="#000" stroke-width="1" />
<rect x="278.80" y="413.46" width="359.10" height="1.00" fill="#202020" />
<line x1="275.50" y1="413.96" x2="278.80" y2="413.96" stroke="#000" stroke-width="1" />
<rect x="278.80" y="404.34" width="359.10" height="1.00" fill="#202020" />
<line x1="275.50" y1="404.84" x2="278.80" y2="404.84" stroke="#000" stroke-width="1" />
<rect x="278.80" y="395.22" width="359.10" height="1.00" fill="#202020" />
<line x1="275.50" y1="395.72" x2="278.80" y2="395.72" stroke="#000" stroke-width="1" />
<rect x="278.80" y="386.10" width="359.10" height="1.00" fill="#202020" />
<line x1="275.50" y1="386.60" x2="278.80" y2="386.60" stroke="#000" stroke-width="1" />
<rect x="278.80" y="376.98" width="359.10" height="1.00" fill="#202020" />
<line x1="275.50" y1="377.48" x2="278.80" y2="377.48" stroke="#000" stroke-width="1" />
<rect x="278.80" y="367.86" width="359.10" height="1.00" fill="#202020" />
<line x1="275.50" y1="368.36" x2="278.80" y2="368.36" stroke="#000" stroke-width="1" />
<rect x="278.80" y="358.74" width="359.10" height="1.00" fill="#202020" />
<line x1="275.50" y1="359.24" x2="278.80" y2="359.24" stroke="#000" stroke-width="1" />
<rect x="278.80" y="349.62" width="359.10" height="1.00" fill="#202020" />
<line x1="275.50" y1="350.12" x2="278.80" y2="350.12" stroke="#000" stroke-width="1" />
<rect x="278.80" y="350.10" width="359.10" height="82.10" fill="none" stroke="#707070" stroke-width="0.8"/>
<line x1="278.80" y1="350.10" x2="278.80" y2="432.70" stroke="#000" stroke-width="1.2" />
<line x1="278.80" y1="432.20" x2="637.90" y2="432.20" stroke="#000" stroke-width="1.2" />
<line x1="275.50" y1="432.20" x2="278.80" y2="432.20" stroke="#000" stroke-width="1" />
<line x1="278.80" y1="432.20" x2="278.80" y2="434.80" stroke="#000" stroke-width="0.8" />
<line x1="282.29" y1="432.20" x2="282.29" y2="434.80" stroke="#000" stroke-width="0.8" />
<line x1="285.77" y1="432.20" x2="285.77" y2="434.80" stroke="#000" stroke-width="0.8" />
<line x1="289.26" y1="432.20" x2="289.26" y2="434.80" stroke="#000" stroke-width="0.8" />
<line x1="292.74" y1="432.20" x2="292.74" y2="434.80" stroke="#000" stroke-width="0.8" />
<line x1="296.23" y1="432.20" x2="296.23" y2="434.80" stroke="#000" stroke-width="0.8" />
<line x1="299.72" y1="432.20" x2="299.72" y2="434.80" stroke="#000" stroke-width="0.8" />
<line x1="303.20" y1="432.20" x2="303.20" y2="434.80" stroke="#000" stroke-width="0.8" />
<line x1="306.69" y1="432.20" x2="306.69" y2="434.80" stroke="#000" stroke-width="0.8" />
<line x1="310.17" y1="432.20" x2="310.17" y2="434.80" stroke="#000" stroke-width="0.8" />
<line x1="313.66" y1="432.20" x2="313.66" y2="434.80" stroke="#000" stroke-width="0.8" />
<line x1="317.15" y1="432.20" x2="317.15" y2="434.80" stroke="#000" stroke-width="0.8" />
<line x1="320.63" y1="432.20" x2="320.63" y2="434.80" stroke="#000" stroke-width="0.8" />
<line x1="324.12" y1="432.20" x2="324.12" y2="434.80" stroke="#000" stroke-width="0.8" />
<line x1="327.60" y1="432.20" x2="327.60" y2="434.80" stroke="#000" stroke-width="0.8" />
<line x1="331.09" y1="432.20" x2="331.09" y2="434.80" stroke="#000" stroke-width="0.8" />
<line x1="334.58" y1="432.20" x2="334.58" y2="434.80" stroke="#000" stroke-width="0.8" />
<line x1="338.06" y1="432.20" x2="338.06" y2="434.80" stroke="#000" stroke-width="0.8" />
<line x1="341.55" y1="432.20" x2="341.55" y2="434.80" stroke="#000" stroke-width="0.8" />
<line x1="345.03" y1="432.20" x2="345.03" y2="434.80" stroke="#000" stroke-width="0.8" />
<line x1="348.52" y1="432.20" x2="348.52" y2="434.80" stroke="#000" stroke-width="0.8" />
<line x1="352.01" y1="432.20" x2="352.01" y2="434.80" stroke="#000" stroke-width="0.8" />
<line x1="355.49" y1="432.20" x2="355.49" y2="434.80" stroke="#000" stroke-width="0.8" />
<line x1="358.98" y1="432.20" x2="358.98" y2="434.80" stroke="#000" stroke-width="0.8" />
<line x1="362.46" y1="432.20" x2="362.46" y2="434.80" stroke="#000" stroke-width="0.8" />
<line x1="365.95" y1="432.20" x2="365.95" y2="434.80" stroke="#000" stroke-width="0.8" />
<line x1="369.44" y1="432.20" x2="369.44" y2="434.80" stroke="#000" stroke-width="0.8" />
<line x1="372.92" y1="432.20" x2="372.92" y2="434.80" stroke="#000" stroke-width="0.8" />
<line x1="376.41" y1="432.20" x2="376.41" y2="434.80" stroke="#000" stroke-width="0.8" />
<line x1="379.89" y1="432.20" x2="379.89" y2="434.80" stroke="#000" stroke-width="0.8" />
<line x1="383.38" y1="432.20" x2="383.38" y2="434.80" stroke="#000" stroke-width="0.8" />
<line x1="386.87" y1="432.20" x2="386.87" y2="434.80" stroke="#000" stroke-width="0.8" />
<line x1="390.35" y1="432.20" x2="390.35" y2="434.80" stroke="#000" stroke-width="0.8" />
<line x1="393.84" y1="432.20" x2="393.84" y2="434.80" stroke="#000" stroke-width="0.8" />
<line x1="397.32" y1="432.20" x2="397.32" y2="434.80" stroke="#000" stroke-width="0.8" />
<line x1="400.81" y1="432.20" x2="400.81" y2="434.80" stroke="#000" stroke-width="0.8" />
<line x1="404.30" y1="432.20" x2="404.30" y2="434.80" stroke="#000" stroke-width="0.8" />
<line x1="407.78" y1="432.20" x2="407.78" y2="434.80" stroke="#000" stroke-width="0.8" />
<line x1="411.27" y1="432.20" x2="411.27" y2="434.80" stroke="#000" stroke-width="0.8" />
<line x1="414.75" y1="432.20" x2="414.75" y2="434.80" stroke="#000" stroke-width="0.8" />
<line x1="418.24" y1="432.20" x2="418.24" y2="434.80" stroke="#000" stroke-width="0.8" />
<line x1="421.73" y1="432.20" x2="421.73" y2="434.80" stroke="#000" stroke-width="0.8" />
<line x1="425.21" y1="432.20" x2="425.21" y2="434.80" stroke="#000" stroke-width="0.8" />
<line x1="428.70" y1="432.20" x2="428.70" y2="434.80" stroke="#000" stroke-width="0.8" />
<line x1="432.18" y1="432.20" x2="432.18" y2="434.80" stroke="#000" stroke-width="0.8" />
<line x1="435.67" y1="432.20" x2="435.67" y2="434.80" stroke="#000" stroke-width="0.8" />
<line x1="439.16" y1="432.20" x2="439.16" y2="434.80" stroke="#000" stroke-width="0.8" />
<line x1="442.64" y1="432.20" x2="442.64" y2="434.80" stroke="#000" stroke-width="0.8" />
<line x1="446.13" y1="432.20" x2="446.13" y2="434.80" stroke="#000" stroke-width="0.8" />
<line x1="449.61" y1="432.20" x2="449.61" y2="434.80" stroke="#000" stroke-width="0.8" />
<line x1="453.10" y1="432.20" x2="453.10" y2="434.80" stroke="#000" stroke-width="0.8" />
<line x1="456.59" y1="432.20" x2="456.59" y2="434.80" stroke="#000" stroke-width="0.8" />
<line x1="460.07" y1="432.20" x2="460.07" y2="434.80" stroke="#000" stroke-width="0.8" />
<line x1="463.56" y1="432.20" x2="463.56" y2="434.80" stroke="#000" stroke-width="0.8" />
<line x1="467.04" y1="432.20" x2="467.04" y2="434.80" stroke="#000" stroke-width="0.8" />
<line x1="470.53" y1="432.20" x2="470.53" y2="434.80" stroke="#000" stroke-width="0.8" />
<line x1="474.02" y1="432.20" x2="474.02" y2="434.80" stroke="#000" stroke-width="0.8" />
<line x1="477.50" y1="432.20" x2="477.50" y2="434.80" stroke="#000" stroke-width="0.8" />
<line x1="480.99" y1="432.20" x2="480.99" y2="434.80" stroke="#000" stroke-width="0.8" />
<line x1="484.47" y1="432.20" x2="484.47" y2="434.80" stroke="#000" stroke-width="0.8" />
<line x1="487.96" y1="432.20" x2="487.96" y2="434.80" stroke="#000" stroke-width="0.8" />
<line x1="491.45" y1="432.20" x2="491.45" y2="434.80" stroke="#000" stroke-width="0.8" />
<line x1="494.93" y1="432.20" x2="494.93" y2="434.80" stroke="#000" stroke-width="0.8" />
<line x1="498.42" y1="432.20" x2="498.42" y2="434.80" stroke="#000" stroke-width="0.8" />
<line x1="501.90" y1="432.20" x2="501.90" y2="434.80" stroke="#000" stroke-width="0.8" />
<line x1="505.39" y1="432.20" x2="505.39" y2="434.80" stroke="#000" stroke-width="0.8" />
<line x1="508.88" y1="432.20" x2="508.88" y2="434.80" stroke="#000" stroke-width="0.8" />
<line x1="512.36" y1="432.20" x2="512.36" y2="434.80" stroke="#000" stroke-width="0.8" />
<line x1="515.85" y1="432.20" x2="515.85" y2="434.80" stroke="#000" stroke-width="0.8" />
<line x1="519.33" y1="432.20" x2="519.33" y2="434.80" stroke="#000" stroke-width="0.8" />
<line x1="522.82" y1="432.20" x2="522.82" y2="434.80" stroke="#000" stroke-width="0.8" />
<line x1="526.31" y1="432.20" x2="526.31" y2="434.80" stroke="#000" stroke-width="0.8" />
<line x1="529.79" y1="432.20" x2="529.79" y2="434.80" stroke="#000" stroke-width="0.8" />
<line x1="533.28" y1="432.20" x2="533.28" y2="434.80" stroke="#000" stroke-width="0.8" />
<line x1="536.76" y1="432.20" x2="536.76" y2="434.80" stroke="#000" stroke-width="0.8" />
<line x1="540.25" y1="432.20" x2="540.25" y2="434.80" stroke="#000" stroke-width="0.8" />
<line x1="543.74" y1="432.20" x2="543.74" y2="434.80" stroke="#000" stroke-width="0.8" />
<line x1="547.22" y1="432.20" x2="547.22" y2="434.80" stroke="#000" stroke-width="0.8" />
<line x1="550.71" y1="432.20" x2="550.71" y2="434.80" stroke="#000" stroke-width="0.8" />
<line x1="554.19" y1="432.20" x2="554.19" y2="434.80" stroke="#000" stroke-width="0.8" />
<line x1="557.68" y1="432.20" x2="557.68" y2="434.80" stroke="#000" stroke-width="0.8" />
<line x1="561.17" y1="432.20" x2="561.17" y2="434.80" stroke="#000" stroke-width="0.8" />
<line x1="564.65" y1="432.20" x2="564.65" y2="434.80" stroke="#000" stroke-width="0.8" />
<line x1="568.14" y1="432.20" x2="568.14" y2="434.80" stroke="#000" stroke-width="0.8" />
<line x1="571.62" y1="432.20" x2="571.62" y2="434.80" stroke="#000" stroke-width="0.8" />
<line x1="575.11" y1="432.20" x2="575.11" y2="434.80" stroke="#000" stroke-width="0.8" />
<line x1="578.60" y1="432.20" x2="578.60" y2="434.80" stroke="#000" stroke-width="0.8" />
<line x1="582.08" y1="432.20" x2="582.08" y2="434.80" stroke="#000" stroke-width="0.8" />
<line x1="585.57" y1="432.20" x2="585.57" y2="434.80" stroke="#000" stroke-width="0.8" />
<line x1="589.05" y1="432.20" x2="589.05" y2="434.80" stroke="#000" stroke-width="0.8" />
<line x1="592.54" y1="432.20" x2="592.54" y2="434.80" stroke="#000" stroke-width="0.8" />
<line x1="596.03" y1="432.20" x2="596.03" y2="434.80" stroke="#000" stroke-width="0.8" />
<line x1="599.51" y1="432.20" x2="599.51" y2="434.80" stroke="#000" stroke-width="0.8" />
<line x1="603.00" y1="432.20" x2="603.00" y2="434.80" stroke="#000" stroke-width="0.8" />
<line x1="606.48" y1="432.20" x2="606.48" y2="434.80" stroke="#000" stroke-width="0.8" />
<line x1="609.97" y1="432.20" x2="609.97" y2="434.80" stroke="#000" stroke-width="0.8" />
<line x1="613.46" y1="432.20" x2="613.46" y2="434.80" stroke="#000" stroke-width="0.8" />
<line x1="616.94" y1="432.20" x2="616.94" y2="434.80" stroke="#000" stroke-width="0.8" />
<line x1="620.43" y1="432.20" x2="620.43" y2="434.80" stroke="#000" stroke-width="0.8" />
<line x1="623.91" y1="432.20" x2="623.91" y2="434.80" stroke="#000" stroke-width="0.8" />
<line x1="627.40" y1="432.20" x2="627.40" y2="434.80" stroke="#000" stroke-width="0.8" />
<line x1="630.89" y1="432.20" x2="630.89" y2="434.80" stroke="#000" stroke-width="0.8" />
<line x1="634.37" y1="432.20" x2="634.37" y2="434.80" stroke="#000" stroke-width="0.8" />
<line x1="637.86" y1="432.20" x2="637.86" y2="434.80" stroke="#000" stroke-width="0.8" />
<text x="272.20" y="434.70" font-size="6.9" fill="#000" text-anchor="end"  style="">0.00</text>
<text x="272.20" y="425.58" font-size="6.9" fill="#000" text-anchor="end"  style="">2.00</text>
<text x="272.20" y="416.46" font-size="6.9" fill="#000" text-anchor="end"  style="">4.00</text>
<text x="272.20" y="407.34" font-size="6.9" fill="#000" text-anchor="end"  style="">6.00</text>
<text x="272.20" y="398.22" font-size="6.9" fill="#000" text-anchor="end"  style="">8.00</text>
<text x="272.20" y="389.10" font-size="6.9" fill="#000" text-anchor="end"  style="">10.00</text>
<text x="272.20" y="379.98" font-size="6.9" fill="#000" text-anchor="end"  style="">12.00</text>
<text x="272.20" y="370.86" font-size="6.9" fill="#000" text-anchor="end"  style="">14.00</text>
<text x="272.20" y="361.74" font-size="6.9" fill="#000" text-anchor="end"  style="">16.00</text>
<text x="272.20" y="352.62" font-size="6.9" fill="#000" text-anchor="end"  style="">18.00</text>
<text x="0" y="0" font-size="6.6" text-anchor="end" transform="translate(281.70,437.80) rotate(-90)">0.00</text>
<text x="0" y="0" font-size="6.6" text-anchor="end" transform="translate(295.62,437.80) rotate(-90)">0.08</text>
<text x="0" y="0" font-size="6.6" text-anchor="end" transform="translate(309.54,437.80) rotate(-90)">0.16</text>
<text x="0" y="0" font-size="6.6" text-anchor="end" transform="translate(323.46,437.80) rotate(-90)">0.24</text>
<text x="0" y="0" font-size="6.6" text-anchor="end" transform="translate(337.38,437.80) rotate(-90)">0.32</text>
<text x="0" y="0" font-size="6.6" text-anchor="end" transform="translate(351.30,437.80) rotate(-90)">0.40</text>
<text x="0" y="0" font-size="6.6" text-anchor="end" transform="translate(365.22,437.80) rotate(-90)">0.48</text>
<text x="0" y="0" font-size="6.6" text-anchor="end" transform="translate(379.14,437.80) rotate(-90)">0.56</text>
<text x="0" y="0" font-size="6.6" text-anchor="end" transform="translate(393.06,437.80) rotate(-90)">0.64</text>
<text x="0" y="0" font-size="6.6" text-anchor="end" transform="translate(406.98,437.80) rotate(-90)">0.72</text>
<text x="0" y="0" font-size="6.6" text-anchor="end" transform="translate(420.90,437.80) rotate(-90)">0.80</text>
<text x="0" y="0" font-size="6.6" text-anchor="end" transform="translate(434.82,437.80) rotate(-90)">0.88</text>
<text x="0" y="0" font-size="6.6" text-anchor="end" transform="translate(448.74,437.80) rotate(-90)">0.96</text>
<text x="0" y="0" font-size="6.6" text-anchor="end" transform="translate(462.66,437.80) rotate(-90)">1.04</text>
<text x="0" y="0" font-size="6.6" text-anchor="end" transform="translate(476.58,437.80) rotate(-90)">1.12</text>
<text x="0" y="0" font-size="6.6" text-anchor="end" transform="translate(490.50,437.80) rotate(-90)">1.20</text>
<text x="0" y="0" font-size="6.6" text-anchor="end" transform="translate(504.42,437.80) rotate(-90)">1.28</text>
<text x="0" y="0" font-size="6.6" text-anchor="end" transform="translate(518.34,437.80) rotate(-90)">1.36</text>
<text x="0" y="0" font-size="6.6" text-anchor="end" transform="translate(532.26,437.80) rotate(-90)">1.44</text>
<text x="0" y="0" font-size="6.6" text-anchor="end" transform="translate(546.18,437.80) rotate(-90)">1.52</text>
<text x="0" y="0" font-size="6.6" text-anchor="end" transform="translate(560.10,437.80) rotate(-90)">1.60</text>
<text x="0" y="0" font-size="6.6" text-anchor="end" transform="translate(574.02,437.80) rotate(-90)">1.68</text>
<text x="0" y="0" font-size="6.6" text-anchor="end" transform="translate(587.94,437.80) rotate(-90)">1.76</text>
<text x="0" y="0" font-size="6.6" text-anchor="end" transform="translate(601.86,437.80) rotate(-90)">1.84</text>
<text x="0" y="0" font-size="6.6" text-anchor="end" transform="translate(615.78,437.80) rotate(-90)">1.92</text>
<text x="0" y="0" font-size="6.6" text-anchor="end" transform="translate(629.70,437.80) rotate(-90)">2.00</text>
<text x="0" y="0" font-size="7.5" font-weight="bold" text-anchor="middle" textLength="56.5" lengthAdjust="spacingAndGlyphs" transform="translate(249.20,390.80) rotate(-90)">Pressure (barg)</text>
<text x="456.30" y="452.80" font-size="8" fill="#000" text-anchor="middle" font-weight="bold"  style="">Secs</text>
<polyline points="278.80,432.20 279.67,431.88 281.58,409.86 282.45,382.04 283.32,358.78 283.48,358.72 283.68,358.62 283.93,358.50 284.20,358.40 284.47,358.33 284.72,358.33 284.93,358.34 285.13,358.34 285.33,358.39 285.54,358.51 285.80,358.78 286.11,359.24 286.47,359.81 286.86,360.44 287.29,361.21 287.77,362.20 288.30,363.49 288.89,365.17 289.58,367.40 290.35,370.17 291.19,373.23 292.03,376.38 292.85,379.39 293.59,382.04 294.24,384.35 294.82,386.50 295.37,388.51 295.94,390.40 296.55,392.19 297.24,393.90 298.02,395.53 298.84,397.06 299.70,398.50 300.62,399.83 301.60,401.03 302.64,402.10 303.77,403.02 304.98,403.79 306.26,404.43 307.56,404.98 308.86,405.47 310.12,405.93 311.39,406.38 312.70,406.80 314.00,407.15 315.26,407.42 316.41,407.57 317.43,407.58 318.20,407.46 318.76,407.23 319.22,406.89 319.71,406.43 320.35,405.82 321.26,405.07 322.48,404.09 323.93,402.89 325.53,401.55 327.20,400.15 328.88,398.79 330.48,397.54 332.01,396.42 333.55,395.37 335.09,394.34 336.63,393.31 338.16,392.26 339.70,391.16 341.25,389.98 342.81,388.74 344.37,387.47 345.91,386.21 347.44,385.00 348.92,383.86 350.34,382.76 351.70,381.65 353.03,380.59 354.38,379.62 355.78,378.79 357.27,378.16 358.78,377.80 360.25,377.67 361.78,377.68 363.44,377.75 365.33,377.79 367.54,377.71 369.84,377.54 372.13,377.35 374.64,377.14 377.63,376.87 381.33,376.54 385.98,376.11 391.13,375.63 396.47,375.12 402.52,374.53 409.82,373.84 418.86,373.01 430.18,372.01 444.51,370.67 461.57,369.00 480.39,367.19 499.98,365.44 519.36,363.94 537.54,362.89 555.75,362.36 575.03,362.21 594.10,362.32 611.67,362.55 626.48,362.78 637.24,362.89" fill="none" stroke="#3366ff" stroke-width="2" stroke-linejoin="round"/>
<rect x="397.40" y="326.00" width="74.60" height="15.20" fill="#f7f7f7" />
<rect x="397.9" y="326.5" width="73.8" height="14.4" fill="none" stroke="#101010" stroke-width="1"/>
<line x1="400.00" y1="333.20" x2="419.80" y2="333.20" stroke="#3366ff" stroke-width="2" />
<text x="420.00" y="336.20" font-size="7.15" fill="#000" text-anchor="start"  style="">Pressure in ram</text>
<rect x="659.20" y="73.80" width="10.80" height="387.00" fill="#a8d2b0" />
<rect x="659.50" y="76.80" width="10.20" height="10.40" fill="#b5d8bb" />
<rect x="659.50" y="76.80" width="10.20" height="1.00" fill="#e6f3e8" />
<rect x="659.50" y="76.80" width="1.00" height="10.40" fill="#e6f3e8" />
<rect x="659.50" y="86.20" width="10.20" height="1.00" fill="#6f9f7a" />
<rect x="668.70" y="76.80" width="1.00" height="10.40" fill="#6f9f7a" />
<rect x="659.50" y="87.20" width="11.20" height="1.00" fill="#1e3a25" />
<rect x="669.70" y="76.80" width="1.00" height="11.40" fill="#1e3a25" />
<path d="M662.6,83 h4 l-2,-2.4z" fill="#000"/>
<rect x="659.50" y="87.40" width="10.50" height="354.00" fill="#a3cdac" />
<rect x="659.50" y="88.00" width="1.00" height="353.00" fill="#d0e8d4" />
<rect x="669.00" y="88.00" width="1.00" height="353.00" fill="#5f9b6d" />
<rect x="659.50" y="87.40" width="10.50" height="1.00" fill="#1e3a25" />
<rect x="659.50" y="441.30" width="10.50" height="1.00" fill="#1e3a25" />
<rect x="659.50" y="442.30" width="10.50" height="10.00" fill="#c8e2cc" />
<rect x="659.50" y="452.30" width="10.20" height="8.20" fill="#b5d8bb" />
<rect x="659.50" y="452.30" width="10.20" height="1.00" fill="#e6f3e8" />
<rect x="659.50" y="452.30" width="1.00" height="8.20" fill="#e6f3e8" />
<rect x="659.50" y="459.50" width="10.20" height="1.00" fill="#6f9f7a" />
<rect x="668.70" y="452.30" width="1.00" height="8.20" fill="#6f9f7a" />
<rect x="659.50" y="460.50" width="11.20" height="1.00" fill="#1e3a25" />
<rect x="669.70" y="452.30" width="1.00" height="9.20" fill="#1e3a25" />
<path d="M662.6,455.2 h4 l-2,2.4z" fill="#000"/>
<rect x="0.00" y="460.80" width="670.00" height="10.20" fill="#a8d2b0" />
<rect x="2.00" y="461.20" width="8.80" height="9.40" fill="#b5d8bb" />
<rect x="2.00" y="461.20" width="8.80" height="1.00" fill="#e6f3e8" />
<rect x="2.00" y="461.20" width="1.00" height="9.40" fill="#e6f3e8" />
<rect x="2.00" y="469.60" width="8.80" height="1.00" fill="#6f9f7a" />
<rect x="9.80" y="461.20" width="1.00" height="9.40" fill="#6f9f7a" />
<rect x="2.00" y="470.60" width="9.80" height="1.00" fill="#3a6a48" />
<rect x="10.80" y="461.20" width="1.00" height="10.40" fill="#3a6a48" />
<rect x="11.20" y="461.20" width="8.80" height="9.40" fill="#b5d8bb" />
<rect x="11.20" y="461.20" width="8.80" height="1.00" fill="#e6f3e8" />
<rect x="11.20" y="461.20" width="1.00" height="9.40" fill="#e6f3e8" />
<rect x="11.20" y="469.60" width="8.80" height="1.00" fill="#6f9f7a" />
<rect x="19.00" y="461.20" width="1.00" height="9.40" fill="#6f9f7a" />
<rect x="11.20" y="470.60" width="9.80" height="1.00" fill="#3a6a48" />
<rect x="20.00" y="461.20" width="1.00" height="10.40" fill="#3a6a48" />
<rect x="20.40" y="461.20" width="8.80" height="9.40" fill="#b5d8bb" />
<rect x="20.40" y="461.20" width="8.80" height="1.00" fill="#e6f3e8" />
<rect x="20.40" y="461.20" width="1.00" height="9.40" fill="#e6f3e8" />
<rect x="20.40" y="469.60" width="8.80" height="1.00" fill="#6f9f7a" />
<rect x="28.20" y="461.20" width="1.00" height="9.40" fill="#6f9f7a" />
<rect x="20.40" y="470.60" width="9.80" height="1.00" fill="#3a6a48" />
<rect x="29.20" y="461.20" width="1.00" height="10.40" fill="#3a6a48" />
<rect x="29.40" y="461.20" width="8.80" height="9.40" fill="#b5d8bb" />
<rect x="29.40" y="461.20" width="8.80" height="1.00" fill="#e6f3e8" />
<rect x="29.40" y="461.20" width="1.00" height="9.40" fill="#e6f3e8" />
<rect x="29.40" y="469.60" width="8.80" height="1.00" fill="#6f9f7a" />
<rect x="37.20" y="461.20" width="1.00" height="9.40" fill="#6f9f7a" />
<rect x="29.40" y="470.60" width="9.80" height="1.00" fill="#3a6a48" />
<rect x="38.20" y="461.20" width="1.00" height="10.40" fill="#3a6a48" />
<path d="M4.5,463.5 v5 M5.5,466 l3,-2.5 v5z" stroke="#000" stroke-width="0.8" fill="#000"/>
<path d="M14,466 l3,-2.5 v5z" fill="#000"/>
<path d="M26,466 l-3,-2.5 v5z" fill="#000"/>
<path d="M35,466 l-3,-2.5 v5z M35.8,463.5 v5" stroke="#000" stroke-width="0.8" fill="#000"/>
<path d="M82,460.8 L85,470.2 L126,470.2 L129,460.8z" fill="#a6cfae"/>
<path d="M128,460.8 L131,470.2 L206.5,470.2 L209.5,460.8z" fill="#a6cfae"/>
<path d="M129,460.8 L126,470.2 M128.5,466 L130.5,470.2 M209.5,460.8 L206.5,470.2" stroke="#202020" stroke-width="0.9" fill="none"/>
<rect x="82.00" y="470.20" width="128.00" height="1.00" fill="#6f9f7a" />
<text x="87.60" y="468.60" font-size="7.2" fill="#000" text-anchor="start"  textLength="35.4" lengthAdjust="spacingAndGlyphs" style="">Assumptions</text>
<text x="135.70" y="468.60" font-size="7.2" fill="#000" text-anchor="start"  textLength="64.9" lengthAdjust="spacingAndGlyphs" style="">Component schematic</text>
<path d="M38.2,460.8 L41.5,470.4 L79,470.4 L82.3,460.8z" fill="#f8f8f8"/>
<path d="M38.2,460.8 L41.5,470.4 M82.3,460.8 L79,470.4" stroke="#101010" stroke-width="0.9" fill="none"/>
<rect x="41.50" y="470.20" width="37.50" height="1.00" fill="#a0a0a0" />
<text x="43.70" y="468.60" font-size="7.4" fill="#000" text-anchor="start" font-weight="bold"  textLength="33.8" lengthAdjust="spacingAndGlyphs" style="">Input data</text>
<rect x="399.40" y="461.30" width="10.40" height="9.40" fill="#b5d8bb" />
<rect x="399.40" y="461.30" width="10.40" height="1.00" fill="#e6f3e8" />
<rect x="399.40" y="461.30" width="1.00" height="9.40" fill="#e6f3e8" />
<rect x="399.40" y="469.70" width="10.40" height="1.00" fill="#6f9f7a" />
<rect x="408.80" y="461.30" width="1.00" height="9.40" fill="#6f9f7a" />
<rect x="399.40" y="470.70" width="11.40" height="1.00" fill="#1e3a25" />
<rect x="409.80" y="461.30" width="1.00" height="10.40" fill="#1e3a25" />
<path d="M406,463.8 v4 l-2.4,-2z" fill="#000"/>
<rect x="409.80" y="461.30" width="220.40" height="9.40" fill="#a3cdac" />
<rect x="410.00" y="461.30" width="220.00" height="1.00" fill="#d0e8d4" />
<rect x="410.00" y="470.00" width="220.00" height="1.00" fill="#5f9b6d" />
<rect x="409.80" y="461.30" width="1.00" height="9.40" fill="#1e3a25" />
<rect x="630.20" y="461.30" width="1.00" height="9.40" fill="#1e3a25" />
<rect x="631.20" y="461.30" width="18.60" height="9.40" fill="#c8e2cc" />
<rect x="649.50" y="461.30" width="6.00" height="9.40" fill="#b5d8bb" />
<rect x="649.50" y="461.30" width="6.00" height="1.00" fill="#e6f3e8" />
<rect x="649.50" y="461.30" width="1.00" height="9.40" fill="#e6f3e8" />
<rect x="649.50" y="469.70" width="6.00" height="1.00" fill="#6f9f7a" />
<rect x="654.50" y="461.30" width="1.00" height="9.40" fill="#6f9f7a" />
<rect x="649.50" y="470.70" width="7.00" height="1.00" fill="#1e3a25" />
<rect x="655.50" y="461.30" width="1.00" height="10.40" fill="#1e3a25" />
<path d="M651.5,463.8 v4 l2.4,-2z" fill="#000"/>
<rect x="656.50" y="461.00" width="13.50" height="10.00" fill="#a8d2b0" />
<path d="M659,470 v-7.5 h8" stroke="#101010" stroke-width="0.9" fill="none"/>
<rect x="0.00" y="471.00" width="670.00" height="16.00" fill="#a8d2b0" />
<rect x="0.00" y="471.00" width="670.00" height="1.00" fill="#d2ead6" />
<text x="4.50" y="482.30" font-size="8" fill="#000" text-anchor="start"  style="">Ready</text>
<rect x="429.10" y="473" width="2.70" height="12" fill="none" stroke="#6f9f7a" stroke-width="0.8"/>
<path d="M429.60,485 h2.20 v-12" stroke="#e6f3e8" stroke-width="0.8" fill="none"/>
<rect x="433.30" y="473" width="21.50" height="12" fill="none" stroke="#6f9f7a" stroke-width="0.8"/>
<path d="M433.80,485 h21.00 v-12" stroke="#e6f3e8" stroke-width="0.8" fill="none"/>
<rect x="456.30" y="473" width="85.20" height="12" fill="none" stroke="#6f9f7a" stroke-width="0.8"/>
<path d="M456.80,485 h84.70 v-12" stroke="#e6f3e8" stroke-width="0.8" fill="none"/>
<rect x="543.00" y="473" width="17.30" height="12" fill="none" stroke="#6f9f7a" stroke-width="0.8"/>
<path d="M543.50,485 h16.80 v-12" stroke="#e6f3e8" stroke-width="0.8" fill="none"/>
<rect x="561.80" y="473" width="23.60" height="12" fill="none" stroke="#6f9f7a" stroke-width="0.8"/>
<path d="M562.30,485 h23.10 v-12" stroke="#e6f3e8" stroke-width="0.8" fill="none"/>
<rect x="586.90" y="473" width="19.30" height="12" fill="none" stroke="#6f9f7a" stroke-width="0.8"/>
<path d="M587.40,485 h18.80 v-12" stroke="#e6f3e8" stroke-width="0.8" fill="none"/>
<rect x="607.70" y="473" width="21.50" height="12" fill="none" stroke="#6f9f7a" stroke-width="0.8"/>
<path d="M608.20,485 h21.00 v-12" stroke="#e6f3e8" stroke-width="0.8" fill="none"/>
<rect x="630.70" y="473" width="19.00" height="12" fill="none" stroke="#6f9f7a" stroke-width="0.8"/>
<path d="M631.20,485 h18.50 v-12" stroke="#e6f3e8" stroke-width="0.8" fill="none"/>
<rect x="651.20" y="473" width="17.80" height="12" fill="none" stroke="#6f9f7a" stroke-width="0.8"/>
<path d="M651.70,485 h17.30 v-12" stroke="#e6f3e8" stroke-width="0.8" fill="none"/>
<text x="587.40" y="482.00" font-size="7.8" fill="#000" text-anchor="start"  style="">NUM</text>
</svg></body></html>
